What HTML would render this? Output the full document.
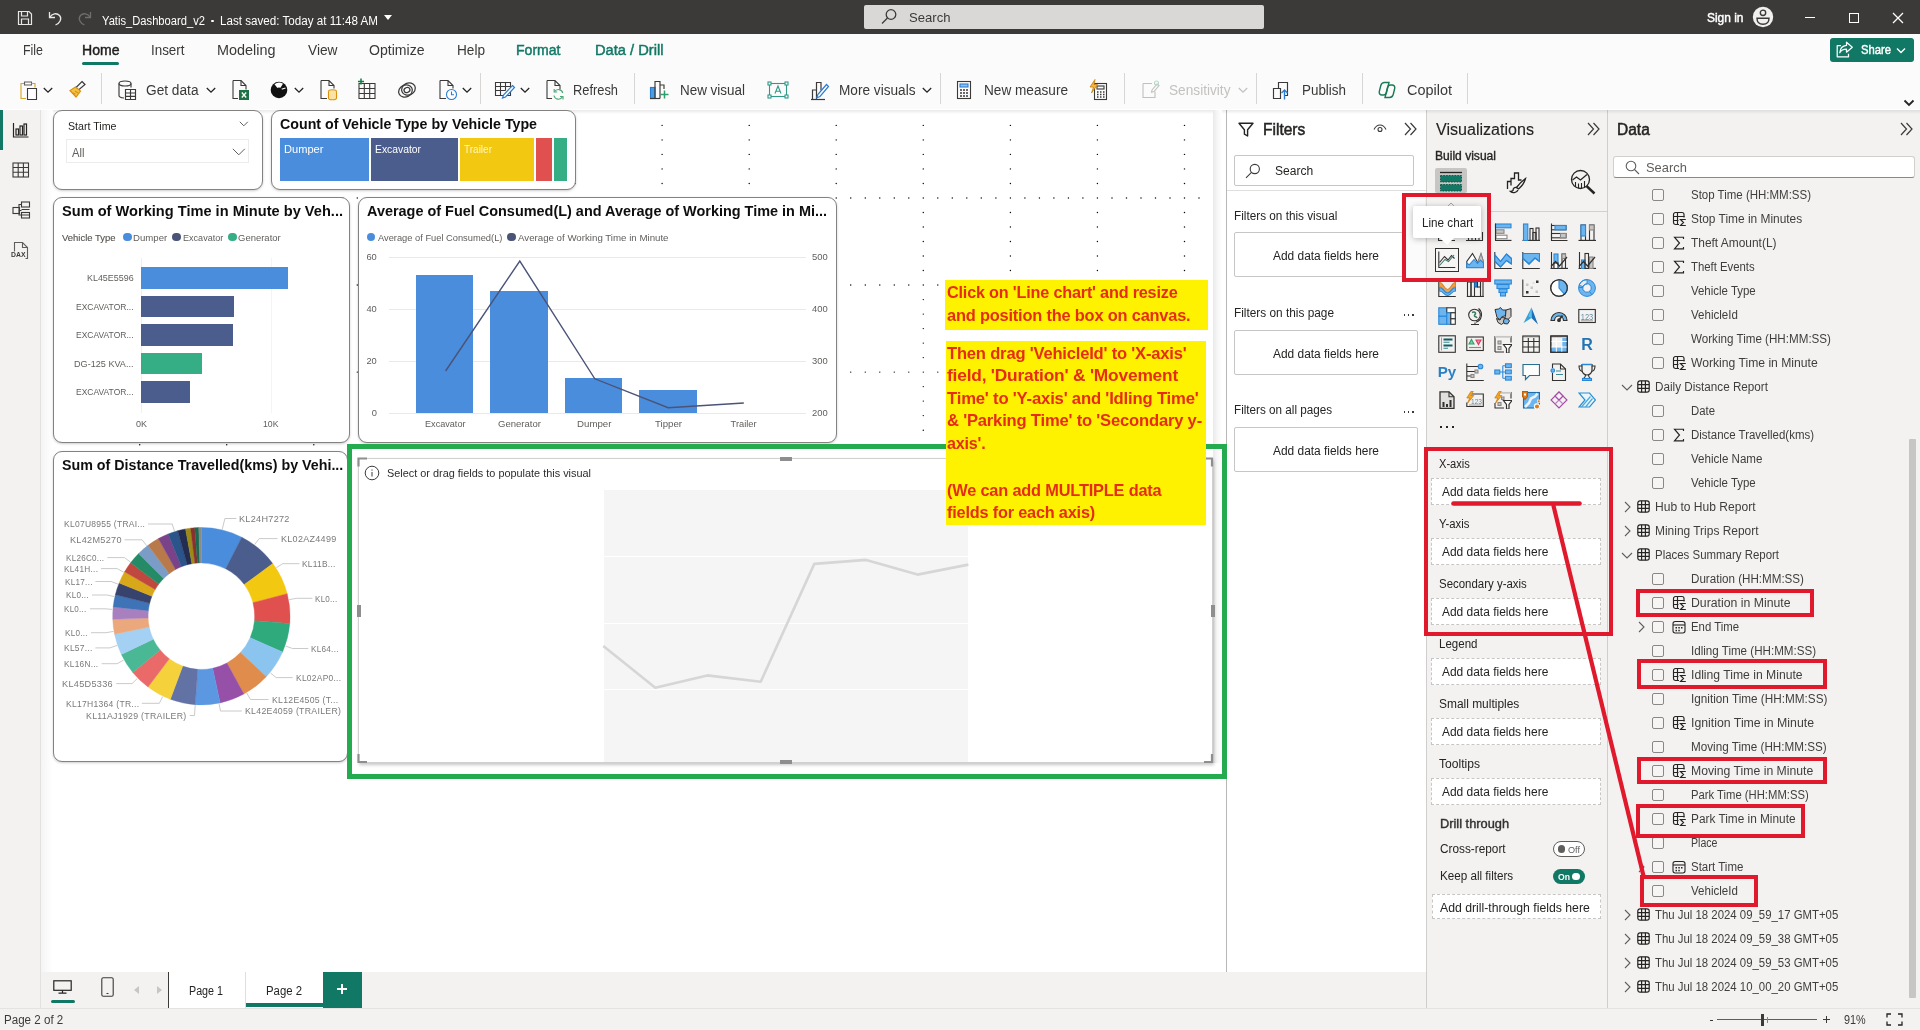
<!DOCTYPE html>
<html><head><meta charset="utf-8">
<style>
*{box-sizing:border-box;margin:0;padding:0}
html,body{width:1920px;height:1030px;overflow:hidden;background:#fff;font-family:"Liberation Sans",sans-serif;color:#252423}
body{will-change:transform}
.a{position:absolute}
.t{position:absolute;white-space:nowrap;line-height:1}
.card{position:absolute;background:#fff;border:1px solid #848280;border-radius:9px;box-shadow:0 1px 2.500px rgba(0,0,0,.2)}
.well{position:absolute;background:#fff;border:1px dashed #c8c6c4}
.fbox{position:absolute;background:#fff;border:1px solid #c8c6c4;border-radius:2px}
.cb{position:absolute;width:12px;height:12px;border:1px solid #8a8886;border-radius:2px;background:#f6f5f4}
.rb{position:absolute;border:4.300px solid #e0192d}
</style></head><body>
<div class="a" style="left:0.00px;top:0.00px;width:1920.00px;height:34.00px;background:#3b3a39;"></div>
<div class="a" style="left:0.00px;top:34.00px;width:1920.00px;height:76.00px;background:#fbfbfb;"></div>
<div class="a" style="left:0.00px;top:109.00px;width:1920.00px;height:1.00px;background:#fff;"></div>
<div class="a" style="left:0.00px;top:110.00px;width:41.00px;height:898.00px;background:#f3f2f1;border-right:1px solid #e3e1df"></div>
<div class="a" style="left:41.00px;top:110.00px;width:1185.00px;height:862.00px;background:#fff;"></div>
<div class="a" style="left:41.00px;top:972.00px;width:1385.00px;height:36.00px;background:#f3f2f1;"></div>
<div class="a" style="left:1226.00px;top:110.00px;width:200.00px;height:862.00px;background:#fff;border-left:1px solid #b9b7b5"></div>
<div class="a" style="left:1425.50px;top:110.00px;width:182.00px;height:898.00px;background:#f3f2f1;border-left:1px solid #d0cecc"></div>
<div class="a" style="left:1607.00px;top:110.00px;width:313.00px;height:898.00px;background:#f3f2f1;border-left:1px solid #d0cecc"></div>
<div class="a" style="left:0.00px;top:1008.00px;width:1920.00px;height:22.00px;background:#f3f2f1;border-top:1px solid #e5e3e1"></div>
<div class="a" style="left:41.00px;top:110.00px;width:1879.00px;height:3.50px;background:linear-gradient(rgba(0,0,0,.085),rgba(0,0,0,0));"></div>
<svg class="a" style="left:16.00px;top:9.00px;" width="18" height="18" viewBox="0 0 18 18"><g fill="none" stroke="#e8e7e6" stroke-width="1.2"><path d="M2.500 2.500h10.500l2.500 2.500v10.500h-13z"></path><path d="M5.500 2.500v4.500h6v-4.500M5.500 15.500v-5.500h7v5.500"></path></g></svg>
<svg class="a" style="left:46.00px;top:9.00px;" width="18" height="18" viewBox="0 0 18 18"><g fill="none" stroke="#e8e7e6" stroke-width="1.3"><path d="M3.500 3v5.500h5.500"></path><path d="M3.800 8.300c2.200-3.800 7-4.800 9.700-1.800 2.800 3.200 0.500 7.500-4 9.500"></path></g></svg>
<svg class="a" style="left:76.00px;top:9.00px;" width="18" height="18" viewBox="0 0 18 18"><g fill="none" stroke="#6e6d6c" stroke-width="1.3"><path d="M14.500 3v5.500h-5.500"></path><path d="M14.200 8.300c-2.200-3.800-7-4.800-9.700-1.800-2.800 3.200-0.500 7.500 4 9.500"></path></g></svg>
<div class="t" style="left: 102px; top: 14.95px; font-size: 12.5px; color: rgb(255, 255, 255); transform: scaleX(0.8947); transform-origin: 0px 0px;">Yatis_Dashboard_v2</div>
<div class="a" style="left:211.30px;top:19.80px;width:2.60px;height:2.60px;background:#fff;border-radius:50%"></div>
<div class="t" style="left: 219.6px; top: 14.95px; font-size: 12.5px; color: rgb(255, 255, 255); transform: scaleX(0.9305); transform-origin: 0px 0px;">Last saved: Today at 11:48 AM</div>
<div class="a" style="left:384px;top:15px;width:0;height:0;border-left:4.500px solid transparent;border-right:4.500px solid transparent;border-top:5px solid #fff"></div>
<div class="a" style="left:864.00px;top:5.00px;width:400.00px;height:24.00px;background:#d9d8d7;border-radius:2px"></div>
<svg class="a" style="left:880.00px;top:8.00px;" width="18" height="18" viewBox="0 0 18 18"><g fill="none" stroke="#3b3a39" stroke-width="1.3"><circle cx="11" cy="6.500" r="4.800"></circle><path d="M7.500 10L2 15.500"></path></g></svg>
<div class="t" style="left: 909px; top: 10.75px; font-size: 13.5px; color: rgb(59, 58, 57); transform: scaleX(0.9701); transform-origin: 0px 0px;">Search</div>
<div class="t" style="left: 1706.8px; top: 11.7px; font-size: 12.6px; color: rgb(255, 255, 255); -webkit-text-stroke: 0.45px rgb(255, 255, 255); transform: scaleX(0.9477); transform-origin: 0px 0px;">Sign in</div>
<svg class="a" style="left:1752.00px;top:5.80px;" width="22" height="22" viewBox="0 0 22 22"><circle cx="11" cy="11" r="10.200" fill="#f1f0ef"></circle><g fill="#f1f0ef" stroke="#3b3a39" stroke-width="1.400"><circle cx="11" cy="6.800" r="2.700"></circle><path d="M5 12.200h12c0 4.300-2.700 6-6 6s-6-1.700-6-6z"></path></g></svg>
<div class="a" style="left:1805.00px;top:17.00px;width:10.00px;height:1.30px;background:#fff;"></div>
<div class="a" style="left:1849px;top:13px;width:10px;height:10px;border:1.300px solid #fff"></div>
<svg class="a" style="left:1892.00px;top:12.00px;" width="12" height="12" viewBox="0 0 12 12"><path d="M1 1l10 10M11 1L1 11" stroke="#fff" stroke-width="1.300"></path></svg>
<div class="t" style="left: 23px; top: 43px; font-size: 14px; color: rgb(58, 57, 56); transform: scaleX(0.8864); transform-origin: 0px 0px;">File</div>
<div class="t" style="left: 81.5px; top: 43px; font-size: 14px; color: rgb(32, 31, 30); -webkit-text-stroke: 0.45px rgb(32, 31, 30); transform: scaleX(1.0038); transform-origin: 0px 0px;">Home</div>
<div class="a" style="left:81.50px;top:62.00px;width:37.50px;height:2.60px;background:#117865;border-radius:1.500px"></div>
<div class="t" style="left: 151px; top: 43px; font-size: 14px; color: rgb(58, 57, 56); transform: scaleX(0.9567); transform-origin: 0px 0px;">Insert</div>
<div class="t" style="left: 217px; top: 43px; font-size: 14px; color: rgb(58, 57, 56); transform: scaleX(1.0294); transform-origin: 0px 0px;">Modeling</div>
<div class="t" style="left: 307.5px; top: 43px; font-size: 14px; color: rgb(58, 57, 56); transform: scaleX(0.9803); transform-origin: 0px 0px;">View</div>
<div class="t" style="left: 368.5px; top: 43px; font-size: 14px; color: rgb(58, 57, 56); transform: scaleX(1.0048); transform-origin: 0px 0px;">Optimize</div>
<div class="t" style="left: 456.5px; top: 43px; font-size: 14px; color: rgb(58, 57, 56); transform: scaleX(0.9723); transform-origin: 0px 0px;">Help</div>
<div class="t" style="left: 515.5px; top: 43px; font-size: 14px; color: rgb(17, 120, 101); -webkit-text-stroke: 0.45px rgb(17, 120, 101); transform: scaleX(1.0035); transform-origin: 0px 0px;">Format</div>
<div class="t" style="left: 595px; top: 43px; font-size: 14px; color: rgb(17, 120, 101); -webkit-text-stroke: 0.45px rgb(17, 120, 101); transform: scaleX(1.0481); transform-origin: 0px 0px;">Data / Drill</div>
<div class="a" style="left:1830.00px;top:38.00px;width:83.50px;height:24.00px;background:#117865;border-radius:3px"></div>
<svg class="a" style="left:1836.00px;top:40.90px;" width="18" height="17" viewBox="0 0 18 17"><g fill="none" stroke="#fff" stroke-width="1.250" stroke-linejoin="round"><path d="M5 4.500H1.200v11.300h11.300v-3"></path><path d="M10.500 1.200l5.800 5-5.800 5v-3c-3.500 0-5.500 1.200-6.700 3.600.3-4.500 2.700-7 6.700-7.400z"></path></g></svg>
<div class="t" style="left: 1861.3px; top: 44.2px; font-size: 12.8px; color: rgb(255, 255, 255); -webkit-text-stroke: 0.45px rgb(255, 255, 255); transform: scaleX(0.8783); transform-origin: 0px 0px;">Share</div>
<svg class="a" style="left:1895.50px;top:46.50px;" width="10" height="8" viewBox="0 0 10 8"><path d="M1 1.500l4 4 4-4" fill="none" stroke="#fff" stroke-width="1.400"></path></svg>
<svg class="a" style="left:19.00px;top:79.00px;" width="20" height="22" viewBox="0 0 20 22"><g fill="none" stroke-width="1.100"><path d="M5.500 4.500h-3.500v15h5" stroke="#d9a520"></path><path d="M5.500 3h7v3h-7z" stroke="#605e5c"></path><path d="M12.500 4.500h3.500v4" stroke="#d9a520"></path><path d="M8.500 9.500h9v11h-9z" stroke="#3b3a39" fill="#fff"></path></g></svg>
<svg class="a" style="left:43.00px;top:87.00px;" width="10" height="7" viewBox="0 0 10 7"><path d="M0.800 1l4.200 4.200L9.200 1" fill="none" stroke="#252423" stroke-width="1.300"></path></svg>
<svg class="a" style="left:68.00px;top:80.00px;" width="19" height="19" viewBox="0 0 19 19"><g fill="none" stroke-width="1.200"><path d="M14 1.500l3 3-6.500 5.500-2.500-2.500z" stroke="#3b3a39"></path><path d="M7.500 7L2 10.500l6 6.500 4.500-6z" stroke="#d9920a" fill="#f5c14a"></path><path d="M5 13l2.500 1M7 11l3 2" stroke="#d9920a"></path></g></svg>
<div class="a" style="left:101.00px;top:73.00px;width:1.00px;height:31.00px;background:#d8d6d4;"></div>
<svg class="a" style="left:117.00px;top:79.00px;" width="20" height="22" viewBox="0 0 20 22"><g fill="none" stroke="#3b3a39" stroke-width="1.150"><ellipse cx="8" cy="4.500" rx="6" ry="2.500"></ellipse><path d="M2 4.500v12c0 1.200 2 2.300 5 2.500M14 4.500v4"></path><path d="M8.500 10.500h10v10h-10zM8.500 14h10M8.500 17.300h10M13.500 10.500v10" fill="#fff"></path></g></svg>
<div class="t" style="left: 146px; top: 82.7px; font-size: 14px; color: rgb(58, 57, 56); transform: scaleX(0.9776); transform-origin: 0px 0px;">Get data</div>
<svg class="a" style="left:206.00px;top:87.00px;" width="10" height="7" viewBox="0 0 10 7"><path d="M0.800 1l4.200 4.200L9.200 1" fill="none" stroke="#252423" stroke-width="1.300"></path></svg>
<svg class="a" style="left:231.00px;top:79.00px;" width="19" height="22" viewBox="0 0 19 22"><g fill="none" stroke-width="1.100"><path d="M2 1.500h8l5 5v4M2 1.500v18h5" stroke="#3b3a39"></path><path d="M10 1.500v5h5" stroke="#3b3a39"></path><rect x="8" y="11" width="10" height="10" fill="#1e7145" stroke="none"></rect><path d="M10.800 13.500l4.400 5M15.200 13.500l-4.400 5" stroke="#fff" stroke-width="1.300"></path></g></svg>
<svg class="a" style="left:270.00px;top:81.00px;" width="18" height="18" viewBox="0 0 18 18"><circle cx="9" cy="9" r="8.300" fill="#111"></circle><path d="M9 9L4.500 3.200A7.200 7.200 0 0 1 13 2.800z" fill="#fff"></path><path d="M9 9l6.500-2" stroke="#fff" stroke-width="1.200"></path><circle cx="9" cy="9.500" r="3" fill="#111"></circle></svg>
<svg class="a" style="left:294.00px;top:87.00px;" width="10" height="7" viewBox="0 0 10 7"><path d="M0.800 1l4.200 4.200L9.200 1" fill="none" stroke="#252423" stroke-width="1.300"></path></svg>
<svg class="a" style="left:319.00px;top:79.00px;" width="19" height="22" viewBox="0 0 19 22"><g fill="none" stroke-width="1.100"><path d="M2 1.500h8l5 5v3M2 1.500v18h6M10 1.500v5h5" stroke="#3b3a39"></path><ellipse cx="13.500" cy="12.500" rx="4" ry="1.800" stroke="#d9920a" fill="#fbe3a6"></ellipse><path d="M9.500 12.500v6.500c0 1 1.800 1.800 4 1.800s4-.8 4-1.800v-6.500" stroke="#d9920a" fill="#fbe3a6"></path></g></svg>
<svg class="a" style="left:356.00px;top:78.00px;" width="21" height="22" viewBox="0 0 21 22"><g fill="none" stroke-width="1.100"><path d="M3 5.500h16v15h-16zM3 10.500h16M3 15.500h16M8.300 5.500v15M13.700 5.500v15" stroke="#3b3a39"></path><path d="M5 0.500v6M2 3.500h6" stroke="#107c41" stroke-width="1.500"></path></g></svg>
<svg class="a" style="left:397.00px;top:81.00px;" width="20" height="18" viewBox="0 0 20 18"><g fill="none" stroke="#3b3a39" stroke-width="1.250"><ellipse cx="8.500" cy="10" rx="7" ry="6" transform="rotate(-25 8.500 10)"></ellipse><ellipse cx="11.500" cy="8" rx="7" ry="6" transform="rotate(-25 11.500 8)"></ellipse><ellipse cx="10" cy="9" rx="3" ry="2.500" transform="rotate(-25 10 9)"></ellipse></g></svg>
<svg class="a" style="left:438.00px;top:79.00px;" width="20" height="22" viewBox="0 0 20 22"><g fill="none" stroke-width="1.100"><path d="M2 1.500h8l5 5v3M2 1.500v18h6M10 1.500v5h5" stroke="#3b3a39"></path><circle cx="13.500" cy="15.500" r="5" stroke="#2b7cd3" fill="#fff"></circle><path d="M13.500 12.500v3.200h2.500" stroke="#2b7cd3"></path></g></svg>
<svg class="a" style="left:462.00px;top:87.00px;" width="10" height="7" viewBox="0 0 10 7"><path d="M0.800 1l4.200 4.200L9.200 1" fill="none" stroke="#252423" stroke-width="1.300"></path></svg>
<div class="a" style="left:480.00px;top:73.00px;width:1.00px;height:31.00px;background:#d8d6d4;"></div>
<svg class="a" style="left:494.00px;top:79.00px;" width="22" height="22" viewBox="0 0 22 22"><g fill="none" stroke-width="1.100"><path d="M1.500 3.500h15v13h-15zM1.500 7.500h15M1.500 11.500h10M6.500 3.500v13M11.500 3.500v8" stroke="#3b3a39"></path><path d="M18.500 6.500l2 2-9 9.500-3 1 1-3z" stroke="#2b7cd3" fill="#fff" stroke-width="1.200"></path></g></svg>
<svg class="a" style="left:520.00px;top:87.00px;" width="10" height="7" viewBox="0 0 10 7"><path d="M0.800 1l4.200 4.200L9.200 1" fill="none" stroke="#252423" stroke-width="1.300"></path></svg>
<svg class="a" style="left:545.00px;top:79.00px;" width="20" height="22" viewBox="0 0 20 22"><g fill="none" stroke-width="1.100"><path d="M2 1.500h8l5 5v4M2 1.500v18h5M10 1.500v5h5" stroke="#3b3a39"></path><path d="M17.800 14a4.500 4.500 0 0 0-8.300-1.200M9 16.500a4.500 4.500 0 0 0 8.400 1.300" stroke="#4fa97a" stroke-width="1.150"></path><path d="M9.200 10v3h3M18 20.500v-3h-3" stroke="#4fa97a" stroke-width="1.150"></path></g></svg>
<div class="t" style="left: 573px; top: 82.7px; font-size: 14px; color: rgb(58, 57, 56); transform: scaleX(0.9178); transform-origin: 0px 0px;">Refresh</div>
<div class="a" style="left:634.00px;top:73.00px;width:1.00px;height:31.00px;background:#d8d6d4;"></div>
<svg class="a" style="left:649.00px;top:79.00px;" width="21" height="22" viewBox="0 0 21 22"><g fill="none" stroke-width="1.150"><rect x="1.500" y="8.500" width="4.500" height="11" fill="#4a9fe0" stroke="#2b7cd3"></rect><path d="M6 19.500V2.500h5v17M11 13v-7h4v4" stroke="#3b3a39"></path><path d="M1 19.500h10" stroke="#3b3a39"></path><path d="M15.500 11.500v8M11.500 15.500h8" stroke="#2e9e6a" stroke-width="1.500"></path></g></svg>
<div class="t" style="left: 680px; top: 82.7px; font-size: 14px; color: rgb(58, 57, 56); transform: scaleX(0.9601); transform-origin: 0px 0px;">New visual</div>
<svg class="a" style="left:767.00px;top:81.00px;" width="22" height="18" viewBox="0 0 22 18"><g fill="none" stroke-width="1.100"><rect x="2.500" y="2.500" width="17" height="13" stroke="#2f9a88"></rect><g fill="#fff" stroke="#2f9a88"><rect x="1" y="1" width="3" height="3"></rect><rect x="18" y="1" width="3" height="3"></rect><rect x="1" y="14" width="3" height="3"></rect><rect x="18" y="14" width="3" height="3"></rect></g><path d="M8 12.500l3-7.500 3 7.500M9 10.300h4" stroke="#2f9a88"></path></g></svg>
<svg class="a" style="left:809.00px;top:79.00px;" width="21" height="22" viewBox="0 0 21 22"><g fill="none" stroke-width="1.200"><path d="M2 20.500h14" stroke="#3b3a39"></path><path d="M3.500 20v-9h4v9M7.500 20V3.500h4.500v8" stroke="#3b3a39"></path><path d="M17.500 5.500l2 2-8.500 10-3.200 1.200 1-3.200z" stroke="#2b7cd3" fill="#fff"></path></g></svg>
<div class="t" style="left: 838.5px; top: 82.7px; font-size: 14px; color: rgb(58, 57, 56); transform: scaleX(0.9734); transform-origin: 0px 0px;">More visuals</div>
<svg class="a" style="left:921.50px;top:87.00px;" width="10" height="7" viewBox="0 0 10 7"><path d="M0.800 1l4.200 4.200L9.200 1" fill="none" stroke="#252423" stroke-width="1.300"></path></svg>
<div class="a" style="left:940.00px;top:73.00px;width:1.00px;height:31.00px;background:#d8d6d4;"></div>
<svg class="a" style="left:956.00px;top:80.00px;" width="16" height="20" viewBox="0 0 16 20"><g fill="none" stroke="#3b3a39" stroke-width="1.100"><rect x="1.500" y="1.500" width="13" height="17"></rect><rect x="4" y="4" width="8" height="3" fill="#8cc4f0" stroke="#2b7cd3"></rect><path d="M4 10h2M7 10h2M10 10h2M4 13h2M7 13h2M10 13h2M4 16h2M7 16h2M10 16h2" stroke-width="1.600"></path></g></svg>
<div class="t" style="left: 984px; top: 82.7px; font-size: 14px; color: rgb(58, 57, 56); transform: scaleX(0.9725); transform-origin: 0px 0px;">New measure</div>
<svg class="a" style="left:1088.00px;top:79.00px;" width="21" height="22" viewBox="0 0 21 22"><g fill="none" stroke-width="1.100"><rect x="6.500" y="4.500" width="12" height="16" stroke="#3b3a39"></rect><rect x="9" y="7" width="7" height="3" stroke="#3b3a39"></rect><path d="M9 13h1.500M12 13h1.500M15 13h1.500M9 15.500h1.500M12 15.500h1.500M15 15.500h1.500M9 18h1.500M12 18h1.500M15 18h1.500" stroke="#3b3a39" stroke-width="1.500"></path><path d="M7 0.500L2 8h3.500l-2 6 6-8.500H6z" fill="#f5b83d" stroke="#c47d0e" stroke-width=".8"></path></g></svg>
<div class="a" style="left:1124.00px;top:73.00px;width:1.00px;height:31.00px;background:#d8d6d4;"></div>
<svg class="a" style="left:1141.00px;top:80.00px;" width="19" height="20" viewBox="0 0 19 20"><g fill="none" stroke="#c2c0be" stroke-width="1.100"><path d="M2 3.500h9M2 3.500v14h12v-6"></path><path d="M11 10l5-6 2 1.500-5 6-2.500.8z"></path><circle cx="15.500" cy="3" r="2" stroke="#b8d8c8"></circle></g></svg>
<div class="t" style="left: 1169px; top: 82.7px; font-size: 14px; color: rgb(196, 194, 192); transform: scaleX(0.9757); transform-origin: 0px 0px;">Sensitivity</div>
<svg class="a" style="left:1238.00px;top:87.00px;" width="10" height="7" viewBox="0 0 10 7"><path d="M0.800 1l4.200 4.200L9.200 1" fill="none" stroke="#c4c2c0" stroke-width="1.300"></path></svg>
<div class="a" style="left:1256.00px;top:73.00px;width:1.00px;height:31.00px;background:#d8d6d4;"></div>
<svg class="a" style="left:1272.00px;top:79.00px;" width="20" height="22" viewBox="0 0 20 22"><g fill="none" stroke-width="1.150"><path d="M1.500 9.500h7v10h-7z" stroke="#3b3a39"></path><path d="M6.500 9V3.500h9v13h-3" stroke="#3b3a39"></path><path d="M12.500 20.500v-9M9.500 14l3-3 3 3" stroke="#2b7cd3" stroke-width="1.400"></path></g></svg>
<div class="t" style="left: 1301.5px; top: 82.7px; font-size: 14px; color: rgb(58, 57, 56); transform: scaleX(0.9581); transform-origin: 0px 0px;">Publish</div>
<div class="a" style="left:1362.00px;top:73.00px;width:1.00px;height:31.00px;background:#d8d6d4;"></div>
<svg class="a" style="left:1377.00px;top:80.00px;" width="20" height="20" viewBox="0 0 20 20"><g fill="none" stroke="#1b7a55" stroke-width="1.400"><path d="M7.500 2.500h4.500l-2.500 10c-.4 1.600-1.500 2.500-3 2.500h-1.500c-2 0-3.200-1.600-2.700-3.500l1.500-6c.5-1.800 1.800-3 3.700-3z"></path><path d="M12.500 17.500h-4.500l2.500-10c.4-1.600 1.500-2.500 3-2.500h1.500c2 0 3.200 1.600 2.700 3.500l-1.500 6c-.5 1.800-1.800 3-3.700 3z"></path></g></svg>
<div class="t" style="left: 1406.5px; top: 82.7px; font-size: 14px; color: rgb(58, 57, 56); transform: scaleX(1.0323); transform-origin: 0px 0px;">Copilot</div>
<div class="a" style="left:1467.00px;top:73.00px;width:1.00px;height:31.00px;background:#d8d6d4;"></div>
<svg class="a" style="left:1903.00px;top:99.00px;" width="12" height="8" viewBox="0 0 12 8"><path d="M1.500 1.500l4.500 4.500 4.500-4.500" fill="none" stroke="#252423" stroke-width="1.800"></path></svg>
<svg class="a" style="left:0;top:0" width="1230" height="780" viewBox="0 0 1230 780"><g fill="#0a0a0a"><circle cx="139.7" cy="125.4" r=".72"></circle><circle cx="139.7" cy="139.9" r=".72"></circle><circle cx="139.7" cy="154.4" r=".72"></circle><circle cx="139.7" cy="168.9" r=".72"></circle><circle cx="139.7" cy="183.5" r=".72"></circle><circle cx="139.7" cy="198.0" r=".72"></circle><circle cx="139.7" cy="212.5" r=".72"></circle><circle cx="139.7" cy="227.0" r=".72"></circle><circle cx="139.7" cy="241.5" r=".72"></circle><circle cx="139.7" cy="256.0" r=".72"></circle><circle cx="139.7" cy="270.5" r=".72"></circle><circle cx="139.7" cy="285.0" r=".72"></circle><circle cx="139.7" cy="299.6" r=".72"></circle><circle cx="139.7" cy="314.1" r=".72"></circle><circle cx="139.7" cy="328.6" r=".72"></circle><circle cx="139.7" cy="343.1" r=".72"></circle><circle cx="139.7" cy="357.6" r=".72"></circle><circle cx="139.7" cy="372.1" r=".72"></circle><circle cx="139.7" cy="386.6" r=".72"></circle><circle cx="139.7" cy="401.1" r=".72"></circle><circle cx="139.7" cy="415.6" r=".72"></circle><circle cx="139.7" cy="430.2" r=".72"></circle><circle cx="139.7" cy="444.7" r=".72"></circle><circle cx="139.7" cy="459.2" r=".72"></circle><circle cx="139.7" cy="473.7" r=".72"></circle><circle cx="139.7" cy="488.2" r=".72"></circle><circle cx="139.7" cy="502.7" r=".72"></circle><circle cx="139.7" cy="517.2" r=".72"></circle><circle cx="139.7" cy="531.7" r=".72"></circle><circle cx="139.7" cy="546.2" r=".72"></circle><circle cx="139.7" cy="560.8" r=".72"></circle><circle cx="139.7" cy="575.3" r=".72"></circle><circle cx="139.7" cy="589.8" r=".72"></circle><circle cx="139.7" cy="604.3" r=".72"></circle><circle cx="139.7" cy="618.8" r=".72"></circle><circle cx="139.7" cy="633.3" r=".72"></circle><circle cx="139.7" cy="647.8" r=".72"></circle><circle cx="139.7" cy="662.3" r=".72"></circle><circle cx="139.7" cy="676.9" r=".72"></circle><circle cx="139.7" cy="691.4" r=".72"></circle><circle cx="139.7" cy="705.9" r=".72"></circle><circle cx="139.7" cy="720.4" r=".72"></circle><circle cx="139.7" cy="734.9" r=".72"></circle><circle cx="139.7" cy="749.4" r=".72"></circle><circle cx="226.7" cy="125.4" r=".72"></circle><circle cx="226.7" cy="139.9" r=".72"></circle><circle cx="226.7" cy="154.4" r=".72"></circle><circle cx="226.7" cy="168.9" r=".72"></circle><circle cx="226.7" cy="183.5" r=".72"></circle><circle cx="226.7" cy="198.0" r=".72"></circle><circle cx="226.7" cy="212.5" r=".72"></circle><circle cx="226.7" cy="227.0" r=".72"></circle><circle cx="226.7" cy="241.5" r=".72"></circle><circle cx="226.7" cy="256.0" r=".72"></circle><circle cx="226.7" cy="270.5" r=".72"></circle><circle cx="226.7" cy="285.0" r=".72"></circle><circle cx="226.7" cy="299.6" r=".72"></circle><circle cx="226.7" cy="314.1" r=".72"></circle><circle cx="226.7" cy="328.6" r=".72"></circle><circle cx="226.7" cy="343.1" r=".72"></circle><circle cx="226.7" cy="357.6" r=".72"></circle><circle cx="226.7" cy="372.1" r=".72"></circle><circle cx="226.7" cy="386.6" r=".72"></circle><circle cx="226.7" cy="401.1" r=".72"></circle><circle cx="226.7" cy="415.6" r=".72"></circle><circle cx="226.7" cy="430.2" r=".72"></circle><circle cx="226.7" cy="444.7" r=".72"></circle><circle cx="226.7" cy="459.2" r=".72"></circle><circle cx="226.7" cy="473.7" r=".72"></circle><circle cx="226.7" cy="488.2" r=".72"></circle><circle cx="226.7" cy="502.7" r=".72"></circle><circle cx="226.7" cy="517.2" r=".72"></circle><circle cx="226.7" cy="531.7" r=".72"></circle><circle cx="226.7" cy="546.2" r=".72"></circle><circle cx="226.7" cy="560.8" r=".72"></circle><circle cx="226.7" cy="575.3" r=".72"></circle><circle cx="226.7" cy="589.8" r=".72"></circle><circle cx="226.7" cy="604.3" r=".72"></circle><circle cx="226.7" cy="618.8" r=".72"></circle><circle cx="226.7" cy="633.3" r=".72"></circle><circle cx="226.7" cy="647.8" r=".72"></circle><circle cx="226.7" cy="662.3" r=".72"></circle><circle cx="226.7" cy="676.9" r=".72"></circle><circle cx="226.7" cy="691.4" r=".72"></circle><circle cx="226.7" cy="705.9" r=".72"></circle><circle cx="226.7" cy="720.4" r=".72"></circle><circle cx="226.7" cy="734.9" r=".72"></circle><circle cx="226.7" cy="749.4" r=".72"></circle><circle cx="313.8" cy="125.4" r=".72"></circle><circle cx="313.8" cy="139.9" r=".72"></circle><circle cx="313.8" cy="154.4" r=".72"></circle><circle cx="313.8" cy="168.9" r=".72"></circle><circle cx="313.8" cy="183.5" r=".72"></circle><circle cx="313.8" cy="198.0" r=".72"></circle><circle cx="313.8" cy="212.5" r=".72"></circle><circle cx="313.8" cy="227.0" r=".72"></circle><circle cx="313.8" cy="241.5" r=".72"></circle><circle cx="313.8" cy="256.0" r=".72"></circle><circle cx="313.8" cy="270.5" r=".72"></circle><circle cx="313.8" cy="285.0" r=".72"></circle><circle cx="313.8" cy="299.6" r=".72"></circle><circle cx="313.8" cy="314.1" r=".72"></circle><circle cx="313.8" cy="328.6" r=".72"></circle><circle cx="313.8" cy="343.1" r=".72"></circle><circle cx="313.8" cy="357.6" r=".72"></circle><circle cx="313.8" cy="372.1" r=".72"></circle><circle cx="313.8" cy="386.6" r=".72"></circle><circle cx="313.8" cy="401.1" r=".72"></circle><circle cx="313.8" cy="415.6" r=".72"></circle><circle cx="313.8" cy="430.2" r=".72"></circle><circle cx="313.8" cy="444.7" r=".72"></circle><circle cx="313.8" cy="459.2" r=".72"></circle><circle cx="313.8" cy="473.7" r=".72"></circle><circle cx="313.8" cy="488.2" r=".72"></circle><circle cx="313.8" cy="502.7" r=".72"></circle><circle cx="313.8" cy="517.2" r=".72"></circle><circle cx="313.8" cy="531.7" r=".72"></circle><circle cx="313.8" cy="546.2" r=".72"></circle><circle cx="313.8" cy="560.8" r=".72"></circle><circle cx="313.8" cy="575.3" r=".72"></circle><circle cx="313.8" cy="589.8" r=".72"></circle><circle cx="313.8" cy="604.3" r=".72"></circle><circle cx="313.8" cy="618.8" r=".72"></circle><circle cx="313.8" cy="633.3" r=".72"></circle><circle cx="313.8" cy="647.8" r=".72"></circle><circle cx="313.8" cy="662.3" r=".72"></circle><circle cx="313.8" cy="676.9" r=".72"></circle><circle cx="313.8" cy="691.4" r=".72"></circle><circle cx="313.8" cy="705.9" r=".72"></circle><circle cx="313.8" cy="720.4" r=".72"></circle><circle cx="313.8" cy="734.9" r=".72"></circle><circle cx="313.8" cy="749.4" r=".72"></circle><circle cx="400.9" cy="125.4" r=".72"></circle><circle cx="400.9" cy="139.9" r=".72"></circle><circle cx="400.9" cy="154.4" r=".72"></circle><circle cx="400.9" cy="168.9" r=".72"></circle><circle cx="400.9" cy="183.5" r=".72"></circle><circle cx="400.9" cy="198.0" r=".72"></circle><circle cx="400.9" cy="212.5" r=".72"></circle><circle cx="400.9" cy="227.0" r=".72"></circle><circle cx="400.9" cy="241.5" r=".72"></circle><circle cx="400.9" cy="256.0" r=".72"></circle><circle cx="400.9" cy="270.5" r=".72"></circle><circle cx="400.9" cy="285.0" r=".72"></circle><circle cx="400.9" cy="299.6" r=".72"></circle><circle cx="400.9" cy="314.1" r=".72"></circle><circle cx="400.9" cy="328.6" r=".72"></circle><circle cx="400.9" cy="343.1" r=".72"></circle><circle cx="400.9" cy="357.6" r=".72"></circle><circle cx="400.9" cy="372.1" r=".72"></circle><circle cx="400.9" cy="386.6" r=".72"></circle><circle cx="400.9" cy="401.1" r=".72"></circle><circle cx="400.9" cy="415.6" r=".72"></circle><circle cx="400.9" cy="430.2" r=".72"></circle><circle cx="400.9" cy="444.7" r=".72"></circle><circle cx="400.9" cy="459.2" r=".72"></circle><circle cx="400.9" cy="473.7" r=".72"></circle><circle cx="400.9" cy="488.2" r=".72"></circle><circle cx="400.9" cy="502.7" r=".72"></circle><circle cx="400.9" cy="517.2" r=".72"></circle><circle cx="400.9" cy="531.7" r=".72"></circle><circle cx="400.9" cy="546.2" r=".72"></circle><circle cx="400.9" cy="560.8" r=".72"></circle><circle cx="400.9" cy="575.3" r=".72"></circle><circle cx="400.9" cy="589.8" r=".72"></circle><circle cx="400.9" cy="604.3" r=".72"></circle><circle cx="400.9" cy="618.8" r=".72"></circle><circle cx="400.9" cy="633.3" r=".72"></circle><circle cx="400.9" cy="647.8" r=".72"></circle><circle cx="400.9" cy="662.3" r=".72"></circle><circle cx="400.9" cy="676.9" r=".72"></circle><circle cx="400.9" cy="691.4" r=".72"></circle><circle cx="400.9" cy="705.9" r=".72"></circle><circle cx="400.9" cy="720.4" r=".72"></circle><circle cx="400.9" cy="734.9" r=".72"></circle><circle cx="400.9" cy="749.4" r=".72"></circle><circle cx="487.9" cy="125.4" r=".72"></circle><circle cx="487.9" cy="139.9" r=".72"></circle><circle cx="487.9" cy="154.4" r=".72"></circle><circle cx="487.9" cy="168.9" r=".72"></circle><circle cx="487.9" cy="183.5" r=".72"></circle><circle cx="487.9" cy="198.0" r=".72"></circle><circle cx="487.9" cy="212.5" r=".72"></circle><circle cx="487.9" cy="227.0" r=".72"></circle><circle cx="487.9" cy="241.5" r=".72"></circle><circle cx="487.9" cy="256.0" r=".72"></circle><circle cx="487.9" cy="270.5" r=".72"></circle><circle cx="487.9" cy="285.0" r=".72"></circle><circle cx="487.9" cy="299.6" r=".72"></circle><circle cx="487.9" cy="314.1" r=".72"></circle><circle cx="487.9" cy="328.6" r=".72"></circle><circle cx="487.9" cy="343.1" r=".72"></circle><circle cx="487.9" cy="357.6" r=".72"></circle><circle cx="487.9" cy="372.1" r=".72"></circle><circle cx="487.9" cy="386.6" r=".72"></circle><circle cx="487.9" cy="401.1" r=".72"></circle><circle cx="487.9" cy="415.6" r=".72"></circle><circle cx="487.9" cy="430.2" r=".72"></circle><circle cx="487.9" cy="444.7" r=".72"></circle><circle cx="487.9" cy="459.2" r=".72"></circle><circle cx="487.9" cy="473.7" r=".72"></circle><circle cx="487.9" cy="488.2" r=".72"></circle><circle cx="487.9" cy="502.7" r=".72"></circle><circle cx="487.9" cy="517.2" r=".72"></circle><circle cx="487.9" cy="531.7" r=".72"></circle><circle cx="487.9" cy="546.2" r=".72"></circle><circle cx="487.9" cy="560.8" r=".72"></circle><circle cx="487.9" cy="575.3" r=".72"></circle><circle cx="487.9" cy="589.8" r=".72"></circle><circle cx="487.9" cy="604.3" r=".72"></circle><circle cx="487.9" cy="618.8" r=".72"></circle><circle cx="487.9" cy="633.3" r=".72"></circle><circle cx="487.9" cy="647.8" r=".72"></circle><circle cx="487.9" cy="662.3" r=".72"></circle><circle cx="487.9" cy="676.9" r=".72"></circle><circle cx="487.9" cy="691.4" r=".72"></circle><circle cx="487.9" cy="705.9" r=".72"></circle><circle cx="487.9" cy="720.4" r=".72"></circle><circle cx="487.9" cy="734.9" r=".72"></circle><circle cx="487.9" cy="749.4" r=".72"></circle><circle cx="575.0" cy="125.4" r=".72"></circle><circle cx="575.0" cy="139.9" r=".72"></circle><circle cx="575.0" cy="154.4" r=".72"></circle><circle cx="575.0" cy="168.9" r=".72"></circle><circle cx="575.0" cy="183.5" r=".72"></circle><circle cx="575.0" cy="198.0" r=".72"></circle><circle cx="575.0" cy="212.5" r=".72"></circle><circle cx="575.0" cy="227.0" r=".72"></circle><circle cx="575.0" cy="241.5" r=".72"></circle><circle cx="575.0" cy="256.0" r=".72"></circle><circle cx="575.0" cy="270.5" r=".72"></circle><circle cx="575.0" cy="285.0" r=".72"></circle><circle cx="575.0" cy="299.6" r=".72"></circle><circle cx="575.0" cy="314.1" r=".72"></circle><circle cx="575.0" cy="328.6" r=".72"></circle><circle cx="575.0" cy="343.1" r=".72"></circle><circle cx="575.0" cy="357.6" r=".72"></circle><circle cx="575.0" cy="372.1" r=".72"></circle><circle cx="575.0" cy="386.6" r=".72"></circle><circle cx="575.0" cy="401.1" r=".72"></circle><circle cx="575.0" cy="415.6" r=".72"></circle><circle cx="575.0" cy="430.2" r=".72"></circle><circle cx="575.0" cy="444.7" r=".72"></circle><circle cx="575.0" cy="459.2" r=".72"></circle><circle cx="575.0" cy="473.7" r=".72"></circle><circle cx="575.0" cy="488.2" r=".72"></circle><circle cx="575.0" cy="502.7" r=".72"></circle><circle cx="575.0" cy="517.2" r=".72"></circle><circle cx="575.0" cy="531.7" r=".72"></circle><circle cx="575.0" cy="546.2" r=".72"></circle><circle cx="575.0" cy="560.8" r=".72"></circle><circle cx="575.0" cy="575.3" r=".72"></circle><circle cx="575.0" cy="589.8" r=".72"></circle><circle cx="575.0" cy="604.3" r=".72"></circle><circle cx="575.0" cy="618.8" r=".72"></circle><circle cx="575.0" cy="633.3" r=".72"></circle><circle cx="575.0" cy="647.8" r=".72"></circle><circle cx="575.0" cy="662.3" r=".72"></circle><circle cx="575.0" cy="676.9" r=".72"></circle><circle cx="575.0" cy="691.4" r=".72"></circle><circle cx="575.0" cy="705.9" r=".72"></circle><circle cx="575.0" cy="720.4" r=".72"></circle><circle cx="575.0" cy="734.9" r=".72"></circle><circle cx="575.0" cy="749.4" r=".72"></circle><circle cx="662.1" cy="125.4" r=".72"></circle><circle cx="662.1" cy="139.9" r=".72"></circle><circle cx="662.1" cy="154.4" r=".72"></circle><circle cx="662.1" cy="168.9" r=".72"></circle><circle cx="662.1" cy="183.5" r=".72"></circle><circle cx="662.1" cy="198.0" r=".72"></circle><circle cx="662.1" cy="212.5" r=".72"></circle><circle cx="662.1" cy="227.0" r=".72"></circle><circle cx="662.1" cy="241.5" r=".72"></circle><circle cx="662.1" cy="256.0" r=".72"></circle><circle cx="662.1" cy="270.5" r=".72"></circle><circle cx="662.1" cy="285.0" r=".72"></circle><circle cx="662.1" cy="299.6" r=".72"></circle><circle cx="662.1" cy="314.1" r=".72"></circle><circle cx="662.1" cy="328.6" r=".72"></circle><circle cx="662.1" cy="343.1" r=".72"></circle><circle cx="662.1" cy="357.6" r=".72"></circle><circle cx="662.1" cy="372.1" r=".72"></circle><circle cx="662.1" cy="386.6" r=".72"></circle><circle cx="662.1" cy="401.1" r=".72"></circle><circle cx="662.1" cy="415.6" r=".72"></circle><circle cx="662.1" cy="430.2" r=".72"></circle><circle cx="662.1" cy="444.7" r=".72"></circle><circle cx="662.1" cy="459.2" r=".72"></circle><circle cx="662.1" cy="473.7" r=".72"></circle><circle cx="662.1" cy="488.2" r=".72"></circle><circle cx="662.1" cy="502.7" r=".72"></circle><circle cx="662.1" cy="517.2" r=".72"></circle><circle cx="662.1" cy="531.7" r=".72"></circle><circle cx="662.1" cy="546.2" r=".72"></circle><circle cx="662.1" cy="560.8" r=".72"></circle><circle cx="662.1" cy="575.3" r=".72"></circle><circle cx="662.1" cy="589.8" r=".72"></circle><circle cx="662.1" cy="604.3" r=".72"></circle><circle cx="662.1" cy="618.8" r=".72"></circle><circle cx="662.1" cy="633.3" r=".72"></circle><circle cx="662.1" cy="647.8" r=".72"></circle><circle cx="662.1" cy="662.3" r=".72"></circle><circle cx="662.1" cy="676.9" r=".72"></circle><circle cx="662.1" cy="691.4" r=".72"></circle><circle cx="662.1" cy="705.9" r=".72"></circle><circle cx="662.1" cy="720.4" r=".72"></circle><circle cx="662.1" cy="734.9" r=".72"></circle><circle cx="662.1" cy="749.4" r=".72"></circle><circle cx="749.2" cy="125.4" r=".72"></circle><circle cx="749.2" cy="139.9" r=".72"></circle><circle cx="749.2" cy="154.4" r=".72"></circle><circle cx="749.2" cy="168.9" r=".72"></circle><circle cx="749.2" cy="183.5" r=".72"></circle><circle cx="749.2" cy="198.0" r=".72"></circle><circle cx="749.2" cy="212.5" r=".72"></circle><circle cx="749.2" cy="227.0" r=".72"></circle><circle cx="749.2" cy="241.5" r=".72"></circle><circle cx="749.2" cy="256.0" r=".72"></circle><circle cx="749.2" cy="270.5" r=".72"></circle><circle cx="749.2" cy="285.0" r=".72"></circle><circle cx="749.2" cy="299.6" r=".72"></circle><circle cx="749.2" cy="314.1" r=".72"></circle><circle cx="749.2" cy="328.6" r=".72"></circle><circle cx="749.2" cy="343.1" r=".72"></circle><circle cx="749.2" cy="357.6" r=".72"></circle><circle cx="749.2" cy="372.1" r=".72"></circle><circle cx="749.2" cy="386.6" r=".72"></circle><circle cx="749.2" cy="401.1" r=".72"></circle><circle cx="749.2" cy="415.6" r=".72"></circle><circle cx="749.2" cy="430.2" r=".72"></circle><circle cx="749.2" cy="444.7" r=".72"></circle><circle cx="749.2" cy="459.2" r=".72"></circle><circle cx="749.2" cy="473.7" r=".72"></circle><circle cx="749.2" cy="488.2" r=".72"></circle><circle cx="749.2" cy="502.7" r=".72"></circle><circle cx="749.2" cy="517.2" r=".72"></circle><circle cx="749.2" cy="531.7" r=".72"></circle><circle cx="749.2" cy="546.2" r=".72"></circle><circle cx="749.2" cy="560.8" r=".72"></circle><circle cx="749.2" cy="575.3" r=".72"></circle><circle cx="749.2" cy="589.8" r=".72"></circle><circle cx="749.2" cy="604.3" r=".72"></circle><circle cx="749.2" cy="618.8" r=".72"></circle><circle cx="749.2" cy="633.3" r=".72"></circle><circle cx="749.2" cy="647.8" r=".72"></circle><circle cx="749.2" cy="662.3" r=".72"></circle><circle cx="749.2" cy="676.9" r=".72"></circle><circle cx="749.2" cy="691.4" r=".72"></circle><circle cx="749.2" cy="705.9" r=".72"></circle><circle cx="749.2" cy="720.4" r=".72"></circle><circle cx="749.2" cy="734.9" r=".72"></circle><circle cx="749.2" cy="749.4" r=".72"></circle><circle cx="836.2" cy="125.4" r=".72"></circle><circle cx="836.2" cy="139.9" r=".72"></circle><circle cx="836.2" cy="154.4" r=".72"></circle><circle cx="836.2" cy="168.9" r=".72"></circle><circle cx="836.2" cy="183.5" r=".72"></circle><circle cx="836.2" cy="198.0" r=".72"></circle><circle cx="836.2" cy="212.5" r=".72"></circle><circle cx="836.2" cy="227.0" r=".72"></circle><circle cx="836.2" cy="241.5" r=".72"></circle><circle cx="836.2" cy="256.0" r=".72"></circle><circle cx="836.2" cy="270.5" r=".72"></circle><circle cx="836.2" cy="285.0" r=".72"></circle><circle cx="836.2" cy="299.6" r=".72"></circle><circle cx="836.2" cy="314.1" r=".72"></circle><circle cx="836.2" cy="328.6" r=".72"></circle><circle cx="836.2" cy="343.1" r=".72"></circle><circle cx="836.2" cy="357.6" r=".72"></circle><circle cx="836.2" cy="372.1" r=".72"></circle><circle cx="836.2" cy="386.6" r=".72"></circle><circle cx="836.2" cy="401.1" r=".72"></circle><circle cx="836.2" cy="415.6" r=".72"></circle><circle cx="836.2" cy="430.2" r=".72"></circle><circle cx="836.2" cy="444.7" r=".72"></circle><circle cx="836.2" cy="459.2" r=".72"></circle><circle cx="836.2" cy="473.7" r=".72"></circle><circle cx="836.2" cy="488.2" r=".72"></circle><circle cx="836.2" cy="502.7" r=".72"></circle><circle cx="836.2" cy="517.2" r=".72"></circle><circle cx="836.2" cy="531.7" r=".72"></circle><circle cx="836.2" cy="546.2" r=".72"></circle><circle cx="836.2" cy="560.8" r=".72"></circle><circle cx="836.2" cy="575.3" r=".72"></circle><circle cx="836.2" cy="589.8" r=".72"></circle><circle cx="836.2" cy="604.3" r=".72"></circle><circle cx="836.2" cy="618.8" r=".72"></circle><circle cx="836.2" cy="633.3" r=".72"></circle><circle cx="836.2" cy="647.8" r=".72"></circle><circle cx="836.2" cy="662.3" r=".72"></circle><circle cx="836.2" cy="676.9" r=".72"></circle><circle cx="836.2" cy="691.4" r=".72"></circle><circle cx="836.2" cy="705.9" r=".72"></circle><circle cx="836.2" cy="720.4" r=".72"></circle><circle cx="836.2" cy="734.9" r=".72"></circle><circle cx="836.2" cy="749.4" r=".72"></circle><circle cx="923.3" cy="125.4" r=".72"></circle><circle cx="923.3" cy="139.9" r=".72"></circle><circle cx="923.3" cy="154.4" r=".72"></circle><circle cx="923.3" cy="168.9" r=".72"></circle><circle cx="923.3" cy="183.5" r=".72"></circle><circle cx="923.3" cy="198.0" r=".72"></circle><circle cx="923.3" cy="212.5" r=".72"></circle><circle cx="923.3" cy="227.0" r=".72"></circle><circle cx="923.3" cy="241.5" r=".72"></circle><circle cx="923.3" cy="256.0" r=".72"></circle><circle cx="923.3" cy="270.5" r=".72"></circle><circle cx="923.3" cy="285.0" r=".72"></circle><circle cx="923.3" cy="299.6" r=".72"></circle><circle cx="923.3" cy="314.1" r=".72"></circle><circle cx="923.3" cy="328.6" r=".72"></circle><circle cx="923.3" cy="343.1" r=".72"></circle><circle cx="923.3" cy="357.6" r=".72"></circle><circle cx="923.3" cy="372.1" r=".72"></circle><circle cx="923.3" cy="386.6" r=".72"></circle><circle cx="923.3" cy="401.1" r=".72"></circle><circle cx="923.3" cy="415.6" r=".72"></circle><circle cx="923.3" cy="430.2" r=".72"></circle><circle cx="923.3" cy="444.7" r=".72"></circle><circle cx="923.3" cy="459.2" r=".72"></circle><circle cx="923.3" cy="473.7" r=".72"></circle><circle cx="923.3" cy="488.2" r=".72"></circle><circle cx="923.3" cy="502.7" r=".72"></circle><circle cx="923.3" cy="517.2" r=".72"></circle><circle cx="923.3" cy="531.7" r=".72"></circle><circle cx="923.3" cy="546.2" r=".72"></circle><circle cx="923.3" cy="560.8" r=".72"></circle><circle cx="923.3" cy="575.3" r=".72"></circle><circle cx="923.3" cy="589.8" r=".72"></circle><circle cx="923.3" cy="604.3" r=".72"></circle><circle cx="923.3" cy="618.8" r=".72"></circle><circle cx="923.3" cy="633.3" r=".72"></circle><circle cx="923.3" cy="647.8" r=".72"></circle><circle cx="923.3" cy="662.3" r=".72"></circle><circle cx="923.3" cy="676.9" r=".72"></circle><circle cx="923.3" cy="691.4" r=".72"></circle><circle cx="923.3" cy="705.9" r=".72"></circle><circle cx="923.3" cy="720.4" r=".72"></circle><circle cx="923.3" cy="734.9" r=".72"></circle><circle cx="923.3" cy="749.4" r=".72"></circle><circle cx="1010.4" cy="125.4" r=".72"></circle><circle cx="1010.4" cy="139.9" r=".72"></circle><circle cx="1010.4" cy="154.4" r=".72"></circle><circle cx="1010.4" cy="168.9" r=".72"></circle><circle cx="1010.4" cy="183.5" r=".72"></circle><circle cx="1010.4" cy="198.0" r=".72"></circle><circle cx="1010.4" cy="212.5" r=".72"></circle><circle cx="1010.4" cy="227.0" r=".72"></circle><circle cx="1010.4" cy="241.5" r=".72"></circle><circle cx="1010.4" cy="256.0" r=".72"></circle><circle cx="1010.4" cy="270.5" r=".72"></circle><circle cx="1010.4" cy="285.0" r=".72"></circle><circle cx="1010.4" cy="299.6" r=".72"></circle><circle cx="1010.4" cy="314.1" r=".72"></circle><circle cx="1010.4" cy="328.6" r=".72"></circle><circle cx="1010.4" cy="343.1" r=".72"></circle><circle cx="1010.4" cy="357.6" r=".72"></circle><circle cx="1010.4" cy="372.1" r=".72"></circle><circle cx="1010.4" cy="386.6" r=".72"></circle><circle cx="1010.4" cy="401.1" r=".72"></circle><circle cx="1010.4" cy="415.6" r=".72"></circle><circle cx="1010.4" cy="430.2" r=".72"></circle><circle cx="1010.4" cy="444.7" r=".72"></circle><circle cx="1010.4" cy="459.2" r=".72"></circle><circle cx="1010.4" cy="473.7" r=".72"></circle><circle cx="1010.4" cy="488.2" r=".72"></circle><circle cx="1010.4" cy="502.7" r=".72"></circle><circle cx="1010.4" cy="517.2" r=".72"></circle><circle cx="1010.4" cy="531.7" r=".72"></circle><circle cx="1010.4" cy="546.2" r=".72"></circle><circle cx="1010.4" cy="560.8" r=".72"></circle><circle cx="1010.4" cy="575.3" r=".72"></circle><circle cx="1010.4" cy="589.8" r=".72"></circle><circle cx="1010.4" cy="604.3" r=".72"></circle><circle cx="1010.4" cy="618.8" r=".72"></circle><circle cx="1010.4" cy="633.3" r=".72"></circle><circle cx="1010.4" cy="647.8" r=".72"></circle><circle cx="1010.4" cy="662.3" r=".72"></circle><circle cx="1010.4" cy="676.9" r=".72"></circle><circle cx="1010.4" cy="691.4" r=".72"></circle><circle cx="1010.4" cy="705.9" r=".72"></circle><circle cx="1010.4" cy="720.4" r=".72"></circle><circle cx="1010.4" cy="734.9" r=".72"></circle><circle cx="1010.4" cy="749.4" r=".72"></circle><circle cx="1097.4" cy="125.4" r=".72"></circle><circle cx="1097.4" cy="139.9" r=".72"></circle><circle cx="1097.4" cy="154.4" r=".72"></circle><circle cx="1097.4" cy="168.9" r=".72"></circle><circle cx="1097.4" cy="183.5" r=".72"></circle><circle cx="1097.4" cy="198.0" r=".72"></circle><circle cx="1097.4" cy="212.5" r=".72"></circle><circle cx="1097.4" cy="227.0" r=".72"></circle><circle cx="1097.4" cy="241.5" r=".72"></circle><circle cx="1097.4" cy="256.0" r=".72"></circle><circle cx="1097.4" cy="270.5" r=".72"></circle><circle cx="1097.4" cy="285.0" r=".72"></circle><circle cx="1097.4" cy="299.6" r=".72"></circle><circle cx="1097.4" cy="314.1" r=".72"></circle><circle cx="1097.4" cy="328.6" r=".72"></circle><circle cx="1097.4" cy="343.1" r=".72"></circle><circle cx="1097.4" cy="357.6" r=".72"></circle><circle cx="1097.4" cy="372.1" r=".72"></circle><circle cx="1097.4" cy="386.6" r=".72"></circle><circle cx="1097.4" cy="401.1" r=".72"></circle><circle cx="1097.4" cy="415.6" r=".72"></circle><circle cx="1097.4" cy="430.2" r=".72"></circle><circle cx="1097.4" cy="444.7" r=".72"></circle><circle cx="1097.4" cy="459.2" r=".72"></circle><circle cx="1097.4" cy="473.7" r=".72"></circle><circle cx="1097.4" cy="488.2" r=".72"></circle><circle cx="1097.4" cy="502.7" r=".72"></circle><circle cx="1097.4" cy="517.2" r=".72"></circle><circle cx="1097.4" cy="531.7" r=".72"></circle><circle cx="1097.4" cy="546.2" r=".72"></circle><circle cx="1097.4" cy="560.8" r=".72"></circle><circle cx="1097.4" cy="575.3" r=".72"></circle><circle cx="1097.4" cy="589.8" r=".72"></circle><circle cx="1097.4" cy="604.3" r=".72"></circle><circle cx="1097.4" cy="618.8" r=".72"></circle><circle cx="1097.4" cy="633.3" r=".72"></circle><circle cx="1097.4" cy="647.8" r=".72"></circle><circle cx="1097.4" cy="662.3" r=".72"></circle><circle cx="1097.4" cy="676.9" r=".72"></circle><circle cx="1097.4" cy="691.4" r=".72"></circle><circle cx="1097.4" cy="705.9" r=".72"></circle><circle cx="1097.4" cy="720.4" r=".72"></circle><circle cx="1097.4" cy="734.9" r=".72"></circle><circle cx="1097.4" cy="749.4" r=".72"></circle><circle cx="1184.5" cy="125.4" r=".72"></circle><circle cx="1184.5" cy="139.9" r=".72"></circle><circle cx="1184.5" cy="154.4" r=".72"></circle><circle cx="1184.5" cy="168.9" r=".72"></circle><circle cx="1184.5" cy="183.5" r=".72"></circle><circle cx="1184.5" cy="198.0" r=".72"></circle><circle cx="1184.5" cy="212.5" r=".72"></circle><circle cx="1184.5" cy="227.0" r=".72"></circle><circle cx="1184.5" cy="241.5" r=".72"></circle><circle cx="1184.5" cy="256.0" r=".72"></circle><circle cx="1184.5" cy="270.5" r=".72"></circle><circle cx="1184.5" cy="285.0" r=".72"></circle><circle cx="1184.5" cy="299.6" r=".72"></circle><circle cx="1184.5" cy="314.1" r=".72"></circle><circle cx="1184.5" cy="328.6" r=".72"></circle><circle cx="1184.5" cy="343.1" r=".72"></circle><circle cx="1184.5" cy="357.6" r=".72"></circle><circle cx="1184.5" cy="372.1" r=".72"></circle><circle cx="1184.5" cy="386.6" r=".72"></circle><circle cx="1184.5" cy="401.1" r=".72"></circle><circle cx="1184.5" cy="415.6" r=".72"></circle><circle cx="1184.5" cy="430.2" r=".72"></circle><circle cx="1184.5" cy="444.7" r=".72"></circle><circle cx="1184.5" cy="459.2" r=".72"></circle><circle cx="1184.5" cy="473.7" r=".72"></circle><circle cx="1184.5" cy="488.2" r=".72"></circle><circle cx="1184.5" cy="502.7" r=".72"></circle><circle cx="1184.5" cy="517.2" r=".72"></circle><circle cx="1184.5" cy="531.7" r=".72"></circle><circle cx="1184.5" cy="546.2" r=".72"></circle><circle cx="1184.5" cy="560.8" r=".72"></circle><circle cx="1184.5" cy="575.3" r=".72"></circle><circle cx="1184.5" cy="589.8" r=".72"></circle><circle cx="1184.5" cy="604.3" r=".72"></circle><circle cx="1184.5" cy="618.8" r=".72"></circle><circle cx="1184.5" cy="633.3" r=".72"></circle><circle cx="1184.5" cy="647.8" r=".72"></circle><circle cx="1184.5" cy="662.3" r=".72"></circle><circle cx="1184.5" cy="676.9" r=".72"></circle><circle cx="1184.5" cy="691.4" r=".72"></circle><circle cx="1184.5" cy="705.9" r=".72"></circle><circle cx="1184.5" cy="720.4" r=".72"></circle><circle cx="1184.5" cy="734.9" r=".72"></circle><circle cx="1184.5" cy="749.4" r=".72"></circle><circle cx="67.1" cy="198.0" r=".72"></circle><circle cx="81.6" cy="198.0" r=".72"></circle><circle cx="96.1" cy="198.0" r=".72"></circle><circle cx="110.6" cy="198.0" r=".72"></circle><circle cx="125.2" cy="198.0" r=".72"></circle><circle cx="154.2" cy="198.0" r=".72"></circle><circle cx="168.7" cy="198.0" r=".72"></circle><circle cx="183.2" cy="198.0" r=".72"></circle><circle cx="197.7" cy="198.0" r=".72"></circle><circle cx="212.2" cy="198.0" r=".72"></circle><circle cx="241.3" cy="198.0" r=".72"></circle><circle cx="255.8" cy="198.0" r=".72"></circle><circle cx="270.3" cy="198.0" r=".72"></circle><circle cx="284.8" cy="198.0" r=".72"></circle><circle cx="299.3" cy="198.0" r=".72"></circle><circle cx="328.3" cy="198.0" r=".72"></circle><circle cx="342.8" cy="198.0" r=".72"></circle><circle cx="357.3" cy="198.0" r=".72"></circle><circle cx="371.9" cy="198.0" r=".72"></circle><circle cx="386.4" cy="198.0" r=".72"></circle><circle cx="415.4" cy="198.0" r=".72"></circle><circle cx="429.9" cy="198.0" r=".72"></circle><circle cx="444.4" cy="198.0" r=".72"></circle><circle cx="458.9" cy="198.0" r=".72"></circle><circle cx="473.4" cy="198.0" r=".72"></circle><circle cx="502.5" cy="198.0" r=".72"></circle><circle cx="517.0" cy="198.0" r=".72"></circle><circle cx="531.5" cy="198.0" r=".72"></circle><circle cx="546.0" cy="198.0" r=".72"></circle><circle cx="560.5" cy="198.0" r=".72"></circle><circle cx="589.5" cy="198.0" r=".72"></circle><circle cx="604.0" cy="198.0" r=".72"></circle><circle cx="618.6" cy="198.0" r=".72"></circle><circle cx="633.1" cy="198.0" r=".72"></circle><circle cx="647.6" cy="198.0" r=".72"></circle><circle cx="676.6" cy="198.0" r=".72"></circle><circle cx="691.1" cy="198.0" r=".72"></circle><circle cx="705.6" cy="198.0" r=".72"></circle><circle cx="720.1" cy="198.0" r=".72"></circle><circle cx="734.6" cy="198.0" r=".72"></circle><circle cx="763.7" cy="198.0" r=".72"></circle><circle cx="778.2" cy="198.0" r=".72"></circle><circle cx="792.7" cy="198.0" r=".72"></circle><circle cx="807.2" cy="198.0" r=".72"></circle><circle cx="821.7" cy="198.0" r=".72"></circle><circle cx="850.7" cy="198.0" r=".72"></circle><circle cx="865.3" cy="198.0" r=".72"></circle><circle cx="879.8" cy="198.0" r=".72"></circle><circle cx="894.3" cy="198.0" r=".72"></circle><circle cx="908.8" cy="198.0" r=".72"></circle><circle cx="937.8" cy="198.0" r=".72"></circle><circle cx="952.3" cy="198.0" r=".72"></circle><circle cx="966.8" cy="198.0" r=".72"></circle><circle cx="981.3" cy="198.0" r=".72"></circle><circle cx="995.9" cy="198.0" r=".72"></circle><circle cx="1024.9" cy="198.0" r=".72"></circle><circle cx="1039.4" cy="198.0" r=".72"></circle><circle cx="1053.9" cy="198.0" r=".72"></circle><circle cx="1068.4" cy="198.0" r=".72"></circle><circle cx="1082.9" cy="198.0" r=".72"></circle><circle cx="1112.0" cy="198.0" r=".72"></circle><circle cx="1126.5" cy="198.0" r=".72"></circle><circle cx="1141.0" cy="198.0" r=".72"></circle><circle cx="1155.5" cy="198.0" r=".72"></circle><circle cx="1170.0" cy="198.0" r=".72"></circle><circle cx="1199.0" cy="198.0" r=".72"></circle><circle cx="67.1" cy="285.0" r=".72"></circle><circle cx="81.6" cy="285.0" r=".72"></circle><circle cx="96.1" cy="285.0" r=".72"></circle><circle cx="110.6" cy="285.0" r=".72"></circle><circle cx="125.2" cy="285.0" r=".72"></circle><circle cx="154.2" cy="285.0" r=".72"></circle><circle cx="168.7" cy="285.0" r=".72"></circle><circle cx="183.2" cy="285.0" r=".72"></circle><circle cx="197.7" cy="285.0" r=".72"></circle><circle cx="212.2" cy="285.0" r=".72"></circle><circle cx="241.3" cy="285.0" r=".72"></circle><circle cx="255.8" cy="285.0" r=".72"></circle><circle cx="270.3" cy="285.0" r=".72"></circle><circle cx="284.8" cy="285.0" r=".72"></circle><circle cx="299.3" cy="285.0" r=".72"></circle><circle cx="328.3" cy="285.0" r=".72"></circle><circle cx="342.8" cy="285.0" r=".72"></circle><circle cx="357.3" cy="285.0" r=".72"></circle><circle cx="371.9" cy="285.0" r=".72"></circle><circle cx="386.4" cy="285.0" r=".72"></circle><circle cx="415.4" cy="285.0" r=".72"></circle><circle cx="429.9" cy="285.0" r=".72"></circle><circle cx="444.4" cy="285.0" r=".72"></circle><circle cx="458.9" cy="285.0" r=".72"></circle><circle cx="473.4" cy="285.0" r=".72"></circle><circle cx="502.5" cy="285.0" r=".72"></circle><circle cx="517.0" cy="285.0" r=".72"></circle><circle cx="531.5" cy="285.0" r=".72"></circle><circle cx="546.0" cy="285.0" r=".72"></circle><circle cx="560.5" cy="285.0" r=".72"></circle><circle cx="589.5" cy="285.0" r=".72"></circle><circle cx="604.0" cy="285.0" r=".72"></circle><circle cx="618.6" cy="285.0" r=".72"></circle><circle cx="633.1" cy="285.0" r=".72"></circle><circle cx="647.6" cy="285.0" r=".72"></circle><circle cx="676.6" cy="285.0" r=".72"></circle><circle cx="691.1" cy="285.0" r=".72"></circle><circle cx="705.6" cy="285.0" r=".72"></circle><circle cx="720.1" cy="285.0" r=".72"></circle><circle cx="734.6" cy="285.0" r=".72"></circle><circle cx="763.7" cy="285.0" r=".72"></circle><circle cx="778.2" cy="285.0" r=".72"></circle><circle cx="792.7" cy="285.0" r=".72"></circle><circle cx="807.2" cy="285.0" r=".72"></circle><circle cx="821.7" cy="285.0" r=".72"></circle><circle cx="850.7" cy="285.0" r=".72"></circle><circle cx="865.3" cy="285.0" r=".72"></circle><circle cx="879.8" cy="285.0" r=".72"></circle><circle cx="894.3" cy="285.0" r=".72"></circle><circle cx="908.8" cy="285.0" r=".72"></circle><circle cx="937.8" cy="285.0" r=".72"></circle><circle cx="952.3" cy="285.0" r=".72"></circle><circle cx="966.8" cy="285.0" r=".72"></circle><circle cx="981.3" cy="285.0" r=".72"></circle><circle cx="995.9" cy="285.0" r=".72"></circle><circle cx="1024.9" cy="285.0" r=".72"></circle><circle cx="1039.4" cy="285.0" r=".72"></circle><circle cx="1053.9" cy="285.0" r=".72"></circle><circle cx="1068.4" cy="285.0" r=".72"></circle><circle cx="1082.9" cy="285.0" r=".72"></circle><circle cx="1112.0" cy="285.0" r=".72"></circle><circle cx="1126.5" cy="285.0" r=".72"></circle><circle cx="1141.0" cy="285.0" r=".72"></circle><circle cx="1155.5" cy="285.0" r=".72"></circle><circle cx="1170.0" cy="285.0" r=".72"></circle><circle cx="1199.0" cy="285.0" r=".72"></circle><circle cx="67.1" cy="372.1" r=".72"></circle><circle cx="81.6" cy="372.1" r=".72"></circle><circle cx="96.1" cy="372.1" r=".72"></circle><circle cx="110.6" cy="372.1" r=".72"></circle><circle cx="125.2" cy="372.1" r=".72"></circle><circle cx="154.2" cy="372.1" r=".72"></circle><circle cx="168.7" cy="372.1" r=".72"></circle><circle cx="183.2" cy="372.1" r=".72"></circle><circle cx="197.7" cy="372.1" r=".72"></circle><circle cx="212.2" cy="372.1" r=".72"></circle><circle cx="241.3" cy="372.1" r=".72"></circle><circle cx="255.8" cy="372.1" r=".72"></circle><circle cx="270.3" cy="372.1" r=".72"></circle><circle cx="284.8" cy="372.1" r=".72"></circle><circle cx="299.3" cy="372.1" r=".72"></circle><circle cx="328.3" cy="372.1" r=".72"></circle><circle cx="342.8" cy="372.1" r=".72"></circle><circle cx="357.3" cy="372.1" r=".72"></circle><circle cx="371.9" cy="372.1" r=".72"></circle><circle cx="386.4" cy="372.1" r=".72"></circle><circle cx="415.4" cy="372.1" r=".72"></circle><circle cx="429.9" cy="372.1" r=".72"></circle><circle cx="444.4" cy="372.1" r=".72"></circle><circle cx="458.9" cy="372.1" r=".72"></circle><circle cx="473.4" cy="372.1" r=".72"></circle><circle cx="502.5" cy="372.1" r=".72"></circle><circle cx="517.0" cy="372.1" r=".72"></circle><circle cx="531.5" cy="372.1" r=".72"></circle><circle cx="546.0" cy="372.1" r=".72"></circle><circle cx="560.5" cy="372.1" r=".72"></circle><circle cx="589.5" cy="372.1" r=".72"></circle><circle cx="604.0" cy="372.1" r=".72"></circle><circle cx="618.6" cy="372.1" r=".72"></circle><circle cx="633.1" cy="372.1" r=".72"></circle><circle cx="647.6" cy="372.1" r=".72"></circle><circle cx="676.6" cy="372.1" r=".72"></circle><circle cx="691.1" cy="372.1" r=".72"></circle><circle cx="705.6" cy="372.1" r=".72"></circle><circle cx="720.1" cy="372.1" r=".72"></circle><circle cx="734.6" cy="372.1" r=".72"></circle><circle cx="763.7" cy="372.1" r=".72"></circle><circle cx="778.2" cy="372.1" r=".72"></circle><circle cx="792.7" cy="372.1" r=".72"></circle><circle cx="807.2" cy="372.1" r=".72"></circle><circle cx="821.7" cy="372.1" r=".72"></circle><circle cx="850.7" cy="372.1" r=".72"></circle><circle cx="865.3" cy="372.1" r=".72"></circle><circle cx="879.8" cy="372.1" r=".72"></circle><circle cx="894.3" cy="372.1" r=".72"></circle><circle cx="908.8" cy="372.1" r=".72"></circle><circle cx="937.8" cy="372.1" r=".72"></circle><circle cx="952.3" cy="372.1" r=".72"></circle><circle cx="966.8" cy="372.1" r=".72"></circle><circle cx="981.3" cy="372.1" r=".72"></circle><circle cx="995.9" cy="372.1" r=".72"></circle><circle cx="1024.9" cy="372.1" r=".72"></circle><circle cx="1039.4" cy="372.1" r=".72"></circle><circle cx="1053.9" cy="372.1" r=".72"></circle><circle cx="1068.4" cy="372.1" r=".72"></circle><circle cx="1082.9" cy="372.1" r=".72"></circle><circle cx="1112.0" cy="372.1" r=".72"></circle><circle cx="1126.5" cy="372.1" r=".72"></circle><circle cx="1141.0" cy="372.1" r=".72"></circle><circle cx="1155.5" cy="372.1" r=".72"></circle><circle cx="1170.0" cy="372.1" r=".72"></circle><circle cx="1199.0" cy="372.1" r=".72"></circle><circle cx="67.1" cy="459.2" r=".72"></circle><circle cx="81.6" cy="459.2" r=".72"></circle><circle cx="96.1" cy="459.2" r=".72"></circle><circle cx="110.6" cy="459.2" r=".72"></circle><circle cx="125.2" cy="459.2" r=".72"></circle><circle cx="154.2" cy="459.2" r=".72"></circle><circle cx="168.7" cy="459.2" r=".72"></circle><circle cx="183.2" cy="459.2" r=".72"></circle><circle cx="197.7" cy="459.2" r=".72"></circle><circle cx="212.2" cy="459.2" r=".72"></circle><circle cx="241.3" cy="459.2" r=".72"></circle><circle cx="255.8" cy="459.2" r=".72"></circle><circle cx="270.3" cy="459.2" r=".72"></circle><circle cx="284.8" cy="459.2" r=".72"></circle><circle cx="299.3" cy="459.2" r=".72"></circle><circle cx="328.3" cy="459.2" r=".72"></circle><circle cx="342.8" cy="459.2" r=".72"></circle><circle cx="371.9" cy="459.2" r=".72"></circle><circle cx="386.4" cy="459.2" r=".72"></circle><circle cx="415.4" cy="459.2" r=".72"></circle><circle cx="429.9" cy="459.2" r=".72"></circle><circle cx="444.4" cy="459.2" r=".72"></circle><circle cx="458.9" cy="459.2" r=".72"></circle><circle cx="473.4" cy="459.2" r=".72"></circle><circle cx="502.5" cy="459.2" r=".72"></circle><circle cx="517.0" cy="459.2" r=".72"></circle><circle cx="531.5" cy="459.2" r=".72"></circle><circle cx="546.0" cy="459.2" r=".72"></circle><circle cx="560.5" cy="459.2" r=".72"></circle><circle cx="589.5" cy="459.2" r=".72"></circle><circle cx="604.0" cy="459.2" r=".72"></circle><circle cx="618.6" cy="459.2" r=".72"></circle><circle cx="633.1" cy="459.2" r=".72"></circle><circle cx="647.6" cy="459.2" r=".72"></circle><circle cx="676.6" cy="459.2" r=".72"></circle><circle cx="691.1" cy="459.2" r=".72"></circle><circle cx="705.6" cy="459.2" r=".72"></circle><circle cx="720.1" cy="459.2" r=".72"></circle><circle cx="734.6" cy="459.2" r=".72"></circle><circle cx="763.7" cy="459.2" r=".72"></circle><circle cx="778.2" cy="459.2" r=".72"></circle><circle cx="792.7" cy="459.2" r=".72"></circle><circle cx="807.2" cy="459.2" r=".72"></circle><circle cx="821.7" cy="459.2" r=".72"></circle><circle cx="850.7" cy="459.2" r=".72"></circle><circle cx="865.3" cy="459.2" r=".72"></circle><circle cx="879.8" cy="459.2" r=".72"></circle><circle cx="894.3" cy="459.2" r=".72"></circle><circle cx="908.8" cy="459.2" r=".72"></circle><circle cx="937.8" cy="459.2" r=".72"></circle><circle cx="952.3" cy="459.2" r=".72"></circle><circle cx="966.8" cy="459.2" r=".72"></circle><circle cx="981.3" cy="459.2" r=".72"></circle><circle cx="995.9" cy="459.2" r=".72"></circle><circle cx="1024.9" cy="459.2" r=".72"></circle><circle cx="1039.4" cy="459.2" r=".72"></circle><circle cx="1053.9" cy="459.2" r=".72"></circle><circle cx="1068.4" cy="459.2" r=".72"></circle><circle cx="1082.9" cy="459.2" r=".72"></circle><circle cx="1112.0" cy="459.2" r=".72"></circle><circle cx="1126.5" cy="459.2" r=".72"></circle><circle cx="1141.0" cy="459.2" r=".72"></circle><circle cx="1155.5" cy="459.2" r=".72"></circle><circle cx="1170.0" cy="459.2" r=".72"></circle><circle cx="1199.0" cy="459.2" r=".72"></circle><circle cx="67.1" cy="546.2" r=".72"></circle><circle cx="81.6" cy="546.2" r=".72"></circle><circle cx="96.1" cy="546.2" r=".72"></circle><circle cx="110.6" cy="546.2" r=".72"></circle><circle cx="125.2" cy="546.2" r=".72"></circle><circle cx="154.2" cy="546.2" r=".72"></circle><circle cx="168.7" cy="546.2" r=".72"></circle><circle cx="183.2" cy="546.2" r=".72"></circle><circle cx="197.7" cy="546.2" r=".72"></circle><circle cx="212.2" cy="546.2" r=".72"></circle><circle cx="241.3" cy="546.2" r=".72"></circle><circle cx="255.8" cy="546.2" r=".72"></circle><circle cx="270.3" cy="546.2" r=".72"></circle><circle cx="284.8" cy="546.2" r=".72"></circle><circle cx="299.3" cy="546.2" r=".72"></circle><circle cx="328.3" cy="546.2" r=".72"></circle><circle cx="342.8" cy="546.2" r=".72"></circle><circle cx="371.9" cy="546.2" r=".72"></circle><circle cx="386.4" cy="546.2" r=".72"></circle><circle cx="415.4" cy="546.2" r=".72"></circle><circle cx="429.9" cy="546.2" r=".72"></circle><circle cx="444.4" cy="546.2" r=".72"></circle><circle cx="458.9" cy="546.2" r=".72"></circle><circle cx="473.4" cy="546.2" r=".72"></circle><circle cx="502.5" cy="546.2" r=".72"></circle><circle cx="517.0" cy="546.2" r=".72"></circle><circle cx="531.5" cy="546.2" r=".72"></circle><circle cx="546.0" cy="546.2" r=".72"></circle><circle cx="560.5" cy="546.2" r=".72"></circle><circle cx="589.5" cy="546.2" r=".72"></circle><circle cx="604.0" cy="546.2" r=".72"></circle><circle cx="618.6" cy="546.2" r=".72"></circle><circle cx="633.1" cy="546.2" r=".72"></circle><circle cx="647.6" cy="546.2" r=".72"></circle><circle cx="676.6" cy="546.2" r=".72"></circle><circle cx="691.1" cy="546.2" r=".72"></circle><circle cx="705.6" cy="546.2" r=".72"></circle><circle cx="720.1" cy="546.2" r=".72"></circle><circle cx="734.6" cy="546.2" r=".72"></circle><circle cx="763.7" cy="546.2" r=".72"></circle><circle cx="778.2" cy="546.2" r=".72"></circle><circle cx="792.7" cy="546.2" r=".72"></circle><circle cx="807.2" cy="546.2" r=".72"></circle><circle cx="821.7" cy="546.2" r=".72"></circle><circle cx="850.7" cy="546.2" r=".72"></circle><circle cx="865.3" cy="546.2" r=".72"></circle><circle cx="879.8" cy="546.2" r=".72"></circle><circle cx="894.3" cy="546.2" r=".72"></circle><circle cx="908.8" cy="546.2" r=".72"></circle><circle cx="937.8" cy="546.2" r=".72"></circle><circle cx="952.3" cy="546.2" r=".72"></circle><circle cx="966.8" cy="546.2" r=".72"></circle><circle cx="981.3" cy="546.2" r=".72"></circle><circle cx="995.9" cy="546.2" r=".72"></circle><circle cx="1024.9" cy="546.2" r=".72"></circle><circle cx="1039.4" cy="546.2" r=".72"></circle><circle cx="1053.9" cy="546.2" r=".72"></circle><circle cx="1068.4" cy="546.2" r=".72"></circle><circle cx="1082.9" cy="546.2" r=".72"></circle><circle cx="1112.0" cy="546.2" r=".72"></circle><circle cx="1126.5" cy="546.2" r=".72"></circle><circle cx="1141.0" cy="546.2" r=".72"></circle><circle cx="1155.5" cy="546.2" r=".72"></circle><circle cx="1170.0" cy="546.2" r=".72"></circle><circle cx="1199.0" cy="546.2" r=".72"></circle><circle cx="67.1" cy="633.3" r=".72"></circle><circle cx="81.6" cy="633.3" r=".72"></circle><circle cx="96.1" cy="633.3" r=".72"></circle><circle cx="110.6" cy="633.3" r=".72"></circle><circle cx="125.2" cy="633.3" r=".72"></circle><circle cx="154.2" cy="633.3" r=".72"></circle><circle cx="168.7" cy="633.3" r=".72"></circle><circle cx="183.2" cy="633.3" r=".72"></circle><circle cx="197.7" cy="633.3" r=".72"></circle><circle cx="212.2" cy="633.3" r=".72"></circle><circle cx="241.3" cy="633.3" r=".72"></circle><circle cx="255.8" cy="633.3" r=".72"></circle><circle cx="270.3" cy="633.3" r=".72"></circle><circle cx="284.8" cy="633.3" r=".72"></circle><circle cx="299.3" cy="633.3" r=".72"></circle><circle cx="328.3" cy="633.3" r=".72"></circle><circle cx="342.8" cy="633.3" r=".72"></circle><circle cx="371.9" cy="633.3" r=".72"></circle><circle cx="386.4" cy="633.3" r=".72"></circle><circle cx="415.4" cy="633.3" r=".72"></circle><circle cx="429.9" cy="633.3" r=".72"></circle><circle cx="444.4" cy="633.3" r=".72"></circle><circle cx="458.9" cy="633.3" r=".72"></circle><circle cx="473.4" cy="633.3" r=".72"></circle><circle cx="502.5" cy="633.3" r=".72"></circle><circle cx="517.0" cy="633.3" r=".72"></circle><circle cx="531.5" cy="633.3" r=".72"></circle><circle cx="546.0" cy="633.3" r=".72"></circle><circle cx="560.5" cy="633.3" r=".72"></circle><circle cx="589.5" cy="633.3" r=".72"></circle><circle cx="604.0" cy="633.3" r=".72"></circle><circle cx="618.6" cy="633.3" r=".72"></circle><circle cx="633.1" cy="633.3" r=".72"></circle><circle cx="647.6" cy="633.3" r=".72"></circle><circle cx="676.6" cy="633.3" r=".72"></circle><circle cx="691.1" cy="633.3" r=".72"></circle><circle cx="705.6" cy="633.3" r=".72"></circle><circle cx="720.1" cy="633.3" r=".72"></circle><circle cx="734.6" cy="633.3" r=".72"></circle><circle cx="763.7" cy="633.3" r=".72"></circle><circle cx="778.2" cy="633.3" r=".72"></circle><circle cx="792.7" cy="633.3" r=".72"></circle><circle cx="807.2" cy="633.3" r=".72"></circle><circle cx="821.7" cy="633.3" r=".72"></circle><circle cx="850.7" cy="633.3" r=".72"></circle><circle cx="865.3" cy="633.3" r=".72"></circle><circle cx="879.8" cy="633.3" r=".72"></circle><circle cx="894.3" cy="633.3" r=".72"></circle><circle cx="908.8" cy="633.3" r=".72"></circle><circle cx="937.8" cy="633.3" r=".72"></circle><circle cx="952.3" cy="633.3" r=".72"></circle><circle cx="966.8" cy="633.3" r=".72"></circle><circle cx="981.3" cy="633.3" r=".72"></circle><circle cx="995.9" cy="633.3" r=".72"></circle><circle cx="1024.9" cy="633.3" r=".72"></circle><circle cx="1039.4" cy="633.3" r=".72"></circle><circle cx="1053.9" cy="633.3" r=".72"></circle><circle cx="1068.4" cy="633.3" r=".72"></circle><circle cx="1082.9" cy="633.3" r=".72"></circle><circle cx="1112.0" cy="633.3" r=".72"></circle><circle cx="1126.5" cy="633.3" r=".72"></circle><circle cx="1141.0" cy="633.3" r=".72"></circle><circle cx="1155.5" cy="633.3" r=".72"></circle><circle cx="1170.0" cy="633.3" r=".72"></circle><circle cx="1199.0" cy="633.3" r=".72"></circle><circle cx="67.1" cy="720.4" r=".72"></circle><circle cx="81.6" cy="720.4" r=".72"></circle><circle cx="96.1" cy="720.4" r=".72"></circle><circle cx="110.6" cy="720.4" r=".72"></circle><circle cx="125.2" cy="720.4" r=".72"></circle><circle cx="154.2" cy="720.4" r=".72"></circle><circle cx="168.7" cy="720.4" r=".72"></circle><circle cx="183.2" cy="720.4" r=".72"></circle><circle cx="197.7" cy="720.4" r=".72"></circle><circle cx="212.2" cy="720.4" r=".72"></circle><circle cx="241.3" cy="720.4" r=".72"></circle><circle cx="255.8" cy="720.4" r=".72"></circle><circle cx="270.3" cy="720.4" r=".72"></circle><circle cx="284.8" cy="720.4" r=".72"></circle><circle cx="299.3" cy="720.4" r=".72"></circle><circle cx="328.3" cy="720.4" r=".72"></circle><circle cx="342.8" cy="720.4" r=".72"></circle><circle cx="371.9" cy="720.4" r=".72"></circle><circle cx="386.4" cy="720.4" r=".72"></circle><circle cx="415.4" cy="720.4" r=".72"></circle><circle cx="429.9" cy="720.4" r=".72"></circle><circle cx="444.4" cy="720.4" r=".72"></circle><circle cx="458.9" cy="720.4" r=".72"></circle><circle cx="473.4" cy="720.4" r=".72"></circle><circle cx="502.5" cy="720.4" r=".72"></circle><circle cx="517.0" cy="720.4" r=".72"></circle><circle cx="531.5" cy="720.4" r=".72"></circle><circle cx="546.0" cy="720.4" r=".72"></circle><circle cx="560.5" cy="720.4" r=".72"></circle><circle cx="589.5" cy="720.4" r=".72"></circle><circle cx="604.0" cy="720.4" r=".72"></circle><circle cx="618.6" cy="720.4" r=".72"></circle><circle cx="633.1" cy="720.4" r=".72"></circle><circle cx="647.6" cy="720.4" r=".72"></circle><circle cx="676.6" cy="720.4" r=".72"></circle><circle cx="691.1" cy="720.4" r=".72"></circle><circle cx="705.6" cy="720.4" r=".72"></circle><circle cx="720.1" cy="720.4" r=".72"></circle><circle cx="734.6" cy="720.4" r=".72"></circle><circle cx="763.7" cy="720.4" r=".72"></circle><circle cx="778.2" cy="720.4" r=".72"></circle><circle cx="792.7" cy="720.4" r=".72"></circle><circle cx="807.2" cy="720.4" r=".72"></circle><circle cx="821.7" cy="720.4" r=".72"></circle><circle cx="850.7" cy="720.4" r=".72"></circle><circle cx="865.3" cy="720.4" r=".72"></circle><circle cx="879.8" cy="720.4" r=".72"></circle><circle cx="894.3" cy="720.4" r=".72"></circle><circle cx="908.8" cy="720.4" r=".72"></circle><circle cx="937.8" cy="720.4" r=".72"></circle><circle cx="952.3" cy="720.4" r=".72"></circle><circle cx="966.8" cy="720.4" r=".72"></circle><circle cx="981.3" cy="720.4" r=".72"></circle><circle cx="995.9" cy="720.4" r=".72"></circle><circle cx="1024.9" cy="720.4" r=".72"></circle><circle cx="1039.4" cy="720.4" r=".72"></circle><circle cx="1053.9" cy="720.4" r=".72"></circle><circle cx="1068.4" cy="720.4" r=".72"></circle><circle cx="1082.9" cy="720.4" r=".72"></circle><circle cx="1112.0" cy="720.4" r=".72"></circle><circle cx="1126.5" cy="720.4" r=".72"></circle><circle cx="1141.0" cy="720.4" r=".72"></circle><circle cx="1155.5" cy="720.4" r=".72"></circle><circle cx="1170.0" cy="720.4" r=".72"></circle><circle cx="1199.0" cy="720.4" r=".72"></circle></g></svg>
<div class="a" style="left:1213.00px;top:110.00px;width:9.00px;height:653.00px;background:linear-gradient(90deg,#e9e9e9,#f6f6f6 45%,#fff);"></div>
<div class="a" style="left:41.00px;top:110.00px;width:12.00px;height:862.00px;background:linear-gradient(90deg,#f4f4f4,#fbfbfb 60%,#fff);"></div>
<div class="a" style="left:0.00px;top:110.00px;width:3.00px;height:40.00px;background:#117865;"></div>
<svg class="a" style="left:12.00px;top:122.00px;" width="18" height="16" viewBox="0 0 18 16"><g fill="none" stroke="#252423" stroke-width="1.200"><path d="M1.500 1v14h15"></path><rect x="4" y="7" width="2.500" height="6"></rect><rect x="8" y="4" width="2.500" height="9"></rect><rect x="12" y="2" width="2.500" height="11"></rect></g></svg>
<svg class="a" style="left:12.00px;top:162.00px;" width="18" height="16" viewBox="0 0 18 16"><g fill="none" stroke="#3b3a39" stroke-width="1.100"><rect x="1" y="1" width="15.500" height="14"></rect><path d="M1 5.500h15.500M1 10.200h15.500M6.200 1v14M11.400 1v14"></path></g></svg>
<svg class="a" style="left:12.00px;top:201.00px;" width="19" height="18" viewBox="0 0 19 18"><g fill="none" stroke="#3b3a39" stroke-width="1.100"><rect x="9.500" y="1" width="8" height="5"></rect><rect x="1" y="6.500" width="6.500" height="6"></rect><rect x="9.500" y="11.500" width="8" height="5.500"></rect><path d="M9.500 3.500h-2.500v10.500h2.500M7 9.500h2.500M9.500 8.500h8M9.500 14h8"></path></g></svg>
<svg class="a" style="left:10.00px;top:241.00px;" width="20" height="19" viewBox="0 0 20 19"><g fill="none" stroke="#605e5c" stroke-width="1.100"><path d="M4.500 10.500v-9h8l5 5v11h-2M12.500 1.500v5h5"></path></g></svg>
<div class="t" style="left: 10.5px; top: 252.05px; font-size: 6.5px; color: rgb(59, 58, 57); font-weight: bold; transform: scaleX(1.0557); transform-origin: 0px 0px;">DAX</div>
<div class="card" style="left:53px;top:110px;width:210px;height:80px"></div>
<div class="t" style="left: 68.3px; top: 121.05px; font-size: 11.5px; color: rgb(37, 36, 35); transform: scaleX(0.9255); transform-origin: 0px 0px;">Start Time</div>
<svg class="a" style="left:238.50px;top:121.00px;" width="10" height="6" viewBox="0 0 10 6"><path d="M0.800 0.800l4 4 4-4" fill="none" stroke="#605e5c" stroke-width="1"></path></svg>
<div class="a" style="left:66px;top:139px;width:183px;height:23.500px;border:1px solid #ececec;background:#fff"></div>
<div class="t" style="left: 71.7px; top: 147.3px; font-size: 12px; color: rgb(96, 94, 92); transform: scaleX(0.9368); transform-origin: 0px 0px;">All</div>
<svg class="a" style="left:232.00px;top:148.00px;" width="14" height="8" viewBox="0 0 14 8"><path d="M0.800 0.800l6 6 6-6" fill="none" stroke="#605e5c" stroke-width="1"></path></svg>
<div class="card" style="left:271px;top:110px;width:305px;height:80px"></div>
<div class="t" style="left: 279.8px; top: 116.85px; font-size: 14.5px; color: rgb(14, 14, 14); font-weight: bold; transform: scaleX(0.9804); transform-origin: 0px 0px;">Count of Vehicle Type by Vehicle Type</div>
<div class="a" style="left:279.80px;top:137.80px;width:89.10px;height:43.00px;background:#4a8ddc;"></div>
<div class="a" style="left:371.20px;top:137.80px;width:86.80px;height:43.00px;background:#4a5d8c;"></div>
<div class="a" style="left:460.10px;top:137.80px;width:74.00px;height:43.00px;background:#f2c811;"></div>
<div class="a" style="left:536.20px;top:137.80px;width:16.00px;height:43.00px;background:#e0504e;"></div>
<div class="a" style="left:554.30px;top:137.80px;width:12.90px;height:43.00px;background:#36ae85;"></div>
<div class="t" style="left: 283.5px; top: 143.85px; font-size: 10.5px; color: rgb(255, 255, 255); transform: scaleX(1.0573); transform-origin: 0px 0px;">Dumper</div>
<div class="t" style="left: 374.5px; top: 143.85px; font-size: 10.5px; color: rgb(255, 255, 255); transform: scaleX(0.9853); transform-origin: 0px 0px;">Excavator</div>
<div class="t" style="left: 464px; top: 143.85px; font-size: 10.5px; color: rgb(255, 247, 200); transform: scaleX(0.9532); transform-origin: 0px 0px;">Trailer</div>
<div class="card" style="left:53px;top:197px;width:297px;height:246px"></div>
<div class="t" style="left: 61.7px; top: 204.05px; font-size: 14.5px; color: rgb(14, 14, 14); font-weight: bold; transform: scaleX(1.0071); transform-origin: 0px 0px;">Sum of Working Time in Minute by Veh...</div>
<div class="t" style="left: 61.7px; top: 233.65px; font-size: 9.3px; color: rgb(85, 82, 79); -webkit-text-stroke: 0.12px rgb(85, 82, 79); transform: scaleX(1.0197); transform-origin: 0px 0px;">Vehicle Type</div>
<div class="a" style="left:122.90px;top:232.60px;width:8.8px;height:8.8px;border-radius:50%;background:#4a8ddc"></div>
<div class="t" style="left: 133.3px; top: 233.65px; font-size: 9.3px; color: rgb(96, 94, 92); transform: scaleX(1.0339); transform-origin: 0px 0px;">Dumper</div>
<div class="a" style="left:171.90px;top:232.60px;width:8.8px;height:8.8px;border-radius:50%;background:#4a5378"></div>
<div class="t" style="left: 183px; top: 233.65px; font-size: 9.3px; color: rgb(96, 94, 92); transform: scaleX(0.9748); transform-origin: 0px 0px;">Excavator</div>
<div class="a" style="left:227.80px;top:232.60px;width:8.8px;height:8.8px;border-radius:50%;background:#36ae85"></div>
<div class="t" style="left: 238.3px; top: 233.65px; font-size: 9.3px; color: rgb(96, 94, 92); transform: scaleX(1.0201); transform-origin: 0px 0px;">Generator</div>
<div class="a" style="left:141.00px;top:258.00px;width:1.00px;height:155.00px;background:#efefef;"></div>
<div class="a" style="left:270.50px;top:258.00px;width:1.00px;height:155.00px;background:#f4f4f4;"></div>
<div class="a" style="left:141.00px;top:267.00px;width:146.60px;height:21.80px;background:#4a8ddc;"></div>
<div class="t" style="left: 86.6px; top: 274.35px; font-size: 9.3px; color: rgb(96, 94, 92); transform: scaleX(0.9587); transform-origin: 0px 0px;">KL45E5596</div>
<div class="a" style="left:141.00px;top:295.60px;width:93.20px;height:21.80px;background:#4a5d8c;"></div>
<div class="t" style="left: 75.7px; top: 302.95px; font-size: 9.3px; color: rgb(96, 94, 92); transform: scaleX(0.9147); transform-origin: 0px 0px;">EXCAVATOR...</div>
<div class="a" style="left:141.00px;top:324.20px;width:91.60px;height:21.50px;background:#4a5d8c;"></div>
<div class="t" style="left: 75.7px; top: 331.4px; font-size: 9.3px; color: rgb(96, 94, 92); transform: scaleX(0.9147); transform-origin: 0px 0px;">EXCAVATOR...</div>
<div class="a" style="left:141.00px;top:352.50px;width:61.00px;height:21.40px;background:#36ae85;"></div>
<div class="t" style="left: 73.7px; top: 359.65px; font-size: 9.3px; color: rgb(96, 94, 92); transform: scaleX(0.9784); transform-origin: 0px 0px;">DG-125 KVA...</div>
<div class="a" style="left:141.00px;top:381.00px;width:49.00px;height:21.60px;background:#4a5d8c;"></div>
<div class="t" style="left: 75.7px; top: 388.25px; font-size: 9.3px; color: rgb(96, 94, 92); transform: scaleX(0.9147); transform-origin: 0px 0px;">EXCAVATOR...</div>
<div class="t" style="left: 136px; top: 419.95px; font-size: 9.3px; color: rgb(96, 94, 92); transform: scaleX(0.967); transform-origin: 0px 0px;">0K</div>
<div class="t" style="left: 262.75px; top: 419.95px; font-size: 9.3px; color: rgb(96, 94, 92); transform: scaleX(0.9367); transform-origin: 0px 0px;">10K</div>
<div class="card" style="left:358px;top:197px;width:479px;height:246px"></div>
<div class="t" style="left: 367px; top: 204.05px; font-size: 14.5px; color: rgb(14, 14, 14); font-weight: bold; transform: scaleX(0.9958); transform-origin: 0px 0px;">Average of Fuel Consumed(L) and Average of Working Time in Mi...</div>
<div class="a" style="left:366.50px;top:232.70px;width:8.6px;height:8.6px;border-radius:50%;background:#4a8ddc"></div>
<div class="t" style="left: 377.9px; top: 233.85px; font-size: 9.3px; color: rgb(96, 94, 92); transform: scaleX(1.0002); transform-origin: 0px 0px;">Average of Fuel Consumed(L)</div>
<div class="a" style="left:507.20px;top:232.70px;width:8.6px;height:8.6px;border-radius:50%;background:#4a5378"></div>
<div class="t" style="left: 518px; top: 233.85px; font-size: 9.3px; color: rgb(96, 94, 92); transform: scaleX(1.0426); transform-origin: 0px 0px;">Average of Working Time in Minute</div>
<div class="a" style="left:388.50px;top:256.90px;width:417.20px;height:1.00px;background:#e9e9e9;"></div>
<div class="t" style="left: 366.46px; top: 253.25px; font-size: 9.3px; color: rgb(96, 94, 92);">60</div>
<div class="t" style="left: 812.2px; top: 253.25px; font-size: 9.3px; color: rgb(96, 94, 92); transform: scaleX(1.0119); transform-origin: 0px 0px;">500</div>
<div class="a" style="left:388.50px;top:308.90px;width:417.20px;height:1.00px;background:#e9e9e9;"></div>
<div class="t" style="left: 366.46px; top: 305.25px; font-size: 9.3px; color: rgb(96, 94, 92);">40</div>
<div class="t" style="left: 812.2px; top: 305.25px; font-size: 9.3px; color: rgb(96, 94, 92); transform: scaleX(1.0119); transform-origin: 0px 0px;">400</div>
<div class="a" style="left:388.50px;top:361.00px;width:417.20px;height:1.00px;background:#e9e9e9;"></div>
<div class="t" style="left: 366.46px; top: 357.35px; font-size: 9.3px; color: rgb(96, 94, 92);">20</div>
<div class="t" style="left: 812.2px; top: 357.35px; font-size: 9.3px; color: rgb(96, 94, 92); transform: scaleX(1.0119); transform-origin: 0px 0px;">300</div>
<div class="a" style="left:388.50px;top:412.90px;width:417.20px;height:1.00px;background:#e9e9e9;"></div>
<div class="t" style="left: 371.63px; top: 409.25px; font-size: 9.3px; color: rgb(96, 94, 92);">0</div>
<div class="t" style="left: 812.2px; top: 409.25px; font-size: 9.3px; color: rgb(96, 94, 92); transform: scaleX(1.0119); transform-origin: 0px 0px;">200</div>
<div class="a" style="left:415.90px;top:275.40px;width:57.30px;height:138.00px;background:#4a8ddc;"></div>
<div class="a" style="left:490.10px;top:291.00px;width:57.80px;height:122.40px;background:#4a8ddc;"></div>
<div class="a" style="left:564.80px;top:378.30px;width:57.30px;height:35.10px;background:#4a8ddc;"></div>
<div class="a" style="left:639.00px;top:389.50px;width:57.90px;height:23.90px;background:#4a8ddc;"></div>
<svg class="a" style="left:0;top:0" width="900" height="450" viewBox="0 0 900 450"><polyline points="445.600,371 519.800,261.100 594.800,378.800 668.200,407.700 743.800,403" fill="none" stroke="#4a5378" stroke-width="1.400"></polyline></svg>
<div class="t" style="left: 425.35px; top: 419.75px; font-size: 9.3px; color: rgb(96, 94, 92); transform: scaleX(0.9796); transform-origin: 0px 0px;">Excavator</div>
<div class="t" style="left: 498.3px; top: 419.75px; font-size: 9.3px; color: rgb(96, 94, 92); transform: scaleX(1.0272); transform-origin: 0px 0px;">Generator</div>
<div class="t" style="left: 577.35px; top: 419.75px; font-size: 9.3px; color: rgb(96, 94, 92); transform: scaleX(1.043); transform-origin: 0px 0px;">Dumper</div>
<div class="t" style="left: 655.3px; top: 419.75px; font-size: 9.3px; color: rgb(96, 94, 92); transform: scaleX(1.0378); transform-origin: 0px 0px;">Tipper</div>
<div class="t" style="left: 730.6px; top: 419.75px; font-size: 9.3px; color: rgb(96, 94, 92); transform: scaleX(1); transform-origin: 0px 0px;">Trailer</div>
<div class="card" style="left:53px;top:451px;width:295px;height:311px"></div>
<div class="t" style="left: 61.7px; top: 458.35px; font-size: 14.5px; color: rgb(14, 14, 14); font-weight: bold; transform: scaleX(0.9833); transform-origin: 0px 0px;">Sum of Distance Travelled(kms) by Vehi...</div>
<svg class="a" style="left:0;top:0" width="360" height="770" viewBox="0 0 360 770"><path d="M201.40 527.50A88.7 88.7 0 0 1 241.81 537.24L225.68 568.75A53.3 53.3 0 0 0 201.40 562.90Z" fill="#4a8ddc" stroke="#4a8ddc" stroke-width=".4"></path><path d="M241.81 537.24A88.7 88.7 0 0 1 272.79 563.56L244.30 584.57A53.3 53.3 0 0 0 225.68 568.75Z" fill="#4a5d8c" stroke="#4a5d8c" stroke-width=".4"></path><path d="M272.79 563.56A88.7 88.7 0 0 1 287.20 593.69L252.96 602.67A53.3 53.3 0 0 0 244.30 584.57Z" fill="#f2c811" stroke="#f2c811" stroke-width=".4"></path><path d="M287.20 593.69A88.7 88.7 0 0 1 289.79 623.62L254.51 620.66A53.3 53.3 0 0 0 252.96 602.67Z" fill="#e0504e" stroke="#e0504e" stroke-width=".4"></path><path d="M289.79 623.62A88.7 88.7 0 0 1 282.56 651.99L250.17 637.71A53.3 53.3 0 0 0 254.51 620.66Z" fill="#2eaa7d" stroke="#2eaa7d" stroke-width=".4"></path><path d="M282.56 651.99A88.7 88.7 0 0 1 266.27 676.69L240.38 652.55A53.3 53.3 0 0 0 250.17 637.71Z" fill="#8cc4f0" stroke="#8cc4f0" stroke-width=".4"></path><path d="M266.27 676.69A88.7 88.7 0 0 1 243.86 694.08L226.91 663.00A53.3 53.3 0 0 0 240.38 652.55Z" fill="#e08c4c" stroke="#e08c4c" stroke-width=".4"></path><path d="M243.86 694.08A88.7 88.7 0 0 1 220.14 702.90L212.66 668.30A53.3 53.3 0 0 0 226.91 663.00Z" fill="#9650a8" stroke="#9650a8" stroke-width=".4"></path><path d="M220.14 702.90A88.7 88.7 0 0 1 195.21 704.68L197.68 669.37A53.3 53.3 0 0 0 212.66 668.30Z" fill="#5c98e2" stroke="#5c98e2" stroke-width=".4"></path><path d="M195.21 704.68A88.7 88.7 0 0 1 170.34 699.28L182.73 666.12A53.3 53.3 0 0 0 197.68 669.37Z" fill="#6272a4" stroke="#6272a4" stroke-width=".4"></path><path d="M170.34 699.28A88.7 88.7 0 0 1 148.02 687.04L169.32 658.77A53.3 53.3 0 0 0 182.73 666.12Z" fill="#f5d23c" stroke="#f5d23c" stroke-width=".4"></path><path d="M148.02 687.04A88.7 88.7 0 0 1 132.76 672.38L160.15 649.96A53.3 53.3 0 0 0 169.32 658.77Z" fill="#ea6a6a" stroke="#ea6a6a" stroke-width=".4"></path><path d="M132.76 672.38A88.7 88.7 0 0 1 121.34 654.39L153.29 639.15A53.3 53.3 0 0 0 160.15 649.96Z" fill="#4ab894" stroke="#4ab894" stroke-width=".4"></path><path d="M121.34 654.39A88.7 88.7 0 0 1 114.54 634.19L149.21 627.01A53.3 53.3 0 0 0 153.29 639.15Z" fill="#a4d0f3" stroke="#a4d0f3" stroke-width=".4"></path><path d="M114.54 634.19A88.7 88.7 0 0 1 112.75 619.30L148.13 618.06A53.3 53.3 0 0 0 149.21 627.01Z" fill="#eaa87c" stroke="#eaa87c" stroke-width=".4"></path><path d="M112.75 619.30A88.7 88.7 0 0 1 113.19 606.93L148.39 610.63A53.3 53.3 0 0 0 148.13 618.06Z" fill="#a880c0" stroke="#a880c0" stroke-width=".4"></path><path d="M113.19 606.93A88.7 88.7 0 0 1 115.33 594.74L149.68 603.31A53.3 53.3 0 0 0 148.39 610.63Z" fill="#3f73b8" stroke="#3f73b8" stroke-width=".4"></path><path d="M115.33 594.74A88.7 88.7 0 0 1 119.16 582.97L151.98 596.23A53.3 53.3 0 0 0 149.68 603.31Z" fill="#38436d" stroke="#38436d" stroke-width=".4"></path><path d="M119.16 582.97A88.7 88.7 0 0 1 124.58 571.85L155.24 589.55A53.3 53.3 0 0 0 151.98 596.23Z" fill="#d9a81a" stroke="#d9a81a" stroke-width=".4"></path><path d="M124.58 571.85A88.7 88.7 0 0 1 130.56 562.82L158.83 584.12A53.3 53.3 0 0 0 155.24 589.55Z" fill="#c0483e" stroke="#c0483e" stroke-width=".4"></path><path d="M130.56 562.82A88.7 88.7 0 0 1 138.68 553.48L163.71 578.51A53.3 53.3 0 0 0 158.83 584.12Z" fill="#258a66" stroke="#258a66" stroke-width=".4"></path><path d="M138.68 553.48A88.7 88.7 0 0 1 148.02 545.36L169.32 573.63A53.3 53.3 0 0 0 163.71 578.51Z" fill="#7a9cc7" stroke="#7a9cc7" stroke-width=".4"></path><path d="M148.02 545.36A88.7 88.7 0 0 1 158.40 538.62L175.56 569.58A53.3 53.3 0 0 0 169.32 573.63Z" fill="#b87a4a" stroke="#b87a4a" stroke-width=".4"></path><path d="M158.40 538.62A88.7 88.7 0 0 1 168.17 533.96L181.43 566.78A53.3 53.3 0 0 0 175.56 569.58Z" fill="#7a4289" stroke="#7a4289" stroke-width=".4"></path><path d="M168.17 533.96A88.7 88.7 0 0 1 177.70 530.73L187.16 564.84A53.3 53.3 0 0 0 181.43 566.78Z" fill="#2a548a" stroke="#2a548a" stroke-width=".4"></path><path d="M177.70 530.73A88.7 88.7 0 0 1 185.54 528.93L191.87 563.76A53.3 53.3 0 0 0 187.16 564.84Z" fill="#232d52" stroke="#232d52" stroke-width=".4"></path><path d="M185.54 528.93A88.7 88.7 0 0 1 190.59 528.16L194.90 563.30A53.3 53.3 0 0 0 191.87 563.76Z" fill="#9c8a17" stroke="#9c8a17" stroke-width=".4"></path><path d="M190.59 528.16A88.7 88.7 0 0 1 194.75 527.75L197.40 563.05A53.3 53.3 0 0 0 194.90 563.30Z" fill="#8c2f2f" stroke="#8c2f2f" stroke-width=".4"></path><path d="M194.75 527.75A88.7 88.7 0 0 1 198.77 527.54L199.82 562.92A53.3 53.3 0 0 0 197.40 563.05Z" fill="#1a6a4e" stroke="#1a6a4e" stroke-width=".4"></path><path d="M198.77 527.54A88.7 88.7 0 0 1 201.40 527.50L201.40 562.90A53.3 53.3 0 0 0 199.82 562.92Z" fill="#8a8a8a" stroke="#8a8a8a" stroke-width=".4"></path><g fill="none" stroke="#c4c4c4" stroke-width=".9"><polyline points="222.2,529.5 224.9,518.5 236.4,518.5"></polyline><polyline points="254.6,544.6 259.1,538.6 277.5,538.6"></polyline><polyline points="276.3,567.8 282.6,563.7 299.4,563.7"></polyline><polyline points="289.1,599.7 296.4,598.3 312.4,598.3"></polyline><polyline points="285.5,646.0 292.5,648.5 308.3,648.5"></polyline><polyline points="270.3,672.8 276.1,677.6 292.7,677.6"></polyline><polyline points="246.7,693.0 250.5,699.5 268.6,699.5"></polyline><polyline points="219.0,703.6 220.5,711.0 241.8,711.0"></polyline><polyline points="174.5,531.2 172.2,524.0 148.0,524.0"></polyline><polyline points="146.7,545.7 142.1,539.8 124.5,539.8"></polyline><polyline points="130.4,562.1 124.5,557.6 107.3,557.6"></polyline><polyline points="123.8,572.3 117.2,568.6 101.0,568.6"></polyline><polyline points="118.1,584.2 111.1,581.5 95.4,581.5"></polyline><polyline points="114.4,596.6 107.1,595.0 92.0,595.0"></polyline><polyline points="112.5,609.4 105.0,608.8 89.9,608.8"></polyline><polyline points="113.5,631.4 106.1,632.7 91.0,632.7"></polyline><polyline points="117.1,645.4 110.0,647.9 95.4,647.9"></polyline><polyline points="123.7,660.0 117.2,663.7 101.7,663.7"></polyline><polyline points="137.4,678.4 132.1,683.6 116.2,683.6"></polyline><polyline points="162.7,696.5 159.4,703.3 141.9,703.3"></polyline><polyline points="195.2,705.2 194.5,715.5 189.7,715.5"></polyline></g></svg>
<div class="t" style="left: 239.4px; top: 513.9px; font-size: 9.6px; color: rgb(122, 122, 122); letter-spacing: 0.3px; transform: scaleX(0.9496); transform-origin: 0px 0px;">KL24H7272</div>
<div class="t" style="left: 280.5px; top: 534px; font-size: 9.6px; color: rgb(122, 122, 122); letter-spacing: 0.3px; transform: scaleX(0.9404); transform-origin: 0px 0px;">KL02AZ4499</div>
<div class="t" style="left: 302.4px; top: 559.1px; font-size: 9.6px; color: rgb(122, 122, 122); letter-spacing: 0.3px; transform: scaleX(0.8727); transform-origin: 0px 0px;">KL11B...</div>
<div class="t" style="left: 315.4px; top: 593.7px; font-size: 9.6px; color: rgb(122, 122, 122); letter-spacing: 0.3px; transform: scaleX(0.8409); transform-origin: 0px 0px;">KL0...</div>
<div class="t" style="left: 311.3px; top: 643.9px; font-size: 9.6px; color: rgb(122, 122, 122); letter-spacing: 0.3px; transform: scaleX(0.8519); transform-origin: 0px 0px;">KL64...</div>
<div class="t" style="left: 295.7px; top: 673px; font-size: 9.6px; color: rgb(122, 122, 122); letter-spacing: 0.3px; transform: scaleX(0.8788); transform-origin: 0px 0px;">KL02AP0...</div>
<div class="t" style="left: 271.6px; top: 694.9px; font-size: 9.6px; color: rgb(122, 122, 122); letter-spacing: 0.3px; transform: scaleX(0.9057); transform-origin: 0px 0px;">KL12E4505 (T...</div>
<div class="t" style="left: 244.8px; top: 706.4px; font-size: 9.6px; color: rgb(122, 122, 122); letter-spacing: 0.3px; transform: scaleX(0.9125); transform-origin: 0px 0px;">KL42E4059 (TRAILER)</div>
<div class="t" style="left: 63.8px; top: 519.4px; font-size: 9.6px; color: rgb(122, 122, 122); letter-spacing: 0.3px; transform: scaleX(0.8846); transform-origin: 0px 0px;">KL07U8955 (TRAI...</div>
<div class="t" style="left: 69.7px; top: 535.2px; font-size: 9.6px; color: rgb(122, 122, 122); letter-spacing: 0.3px; transform: scaleX(0.9513); transform-origin: 0px 0px;">KL42M5270</div>
<div class="t" style="left: 66px; top: 553px; font-size: 9.6px; color: rgb(122, 122, 122); letter-spacing: 0.3px; transform: scaleX(0.8441); transform-origin: 0px 0px;">KL26C0...</div>
<div class="t" style="left: 63.8px; top: 564px; font-size: 9.6px; color: rgb(122, 122, 122); letter-spacing: 0.3px; transform: scaleX(0.8607); transform-origin: 0px 0px;">KL41H...</div>
<div class="t" style="left: 64.7px; top: 576.9px; font-size: 9.6px; color: rgb(122, 122, 122); letter-spacing: 0.3px; transform: scaleX(0.8519); transform-origin: 0px 0px;">KL17...</div>
<div class="t" style="left: 66.3px; top: 590.4px; font-size: 9.6px; color: rgb(122, 122, 122); letter-spacing: 0.3px; transform: scaleX(0.8447); transform-origin: 0px 0px;">KL0...</div>
<div class="t" style="left: 64.3px; top: 604.2px; font-size: 9.6px; color: rgb(122, 122, 122); letter-spacing: 0.3px; transform: scaleX(0.8409); transform-origin: 0px 0px;">KL0...</div>
<div class="t" style="left: 65.2px; top: 628.1px; font-size: 9.6px; color: rgb(122, 122, 122); letter-spacing: 0.3px; transform: scaleX(0.8484); transform-origin: 0px 0px;">KL0...</div>
<div class="t" style="left: 63.8px; top: 643.3px; font-size: 9.6px; color: rgb(122, 122, 122); letter-spacing: 0.3px; transform: scaleX(0.8796); transform-origin: 0px 0px;">KL57...</div>
<div class="t" style="left: 64.3px; top: 659.1px; font-size: 9.6px; color: rgb(122, 122, 122); letter-spacing: 0.3px; transform: scaleX(0.8657); transform-origin: 0px 0px;">KL16N...</div>
<div class="t" style="left: 62.3px; top: 679px; font-size: 9.6px; color: rgb(122, 122, 122); letter-spacing: 0.3px; transform: scaleX(0.9534); transform-origin: 0px 0px;">KL45D5336</div>
<div class="t" style="left: 65.6px; top: 698.7px; font-size: 9.6px; color: rgb(122, 122, 122); letter-spacing: 0.3px; transform: scaleX(0.8925); transform-origin: 0px 0px;">KL17H1364 (TR...</div>
<div class="t" style="left: 86.2px; top: 710.9px; font-size: 9.6px; color: rgb(122, 122, 122); letter-spacing: 0.3px; transform: scaleX(0.9152); transform-origin: 0px 0px;">KL11AJ1929 (TRAILER)</div>
<div class="a" style="left:358px;top:458px;width:855px;height:305px;background:#fff;border:1px solid #d2d0ce;box-shadow:1px 2px 3px rgba(0,0,0,.22)"></div>
<div class="a" style="left:603.80px;top:489.60px;width:364.60px;height:272.00px;background:#f5f5f5;"></div>
<div class="a" style="left:603.80px;top:555.50px;width:364.60px;height:1.40px;background:#fff;"></div>
<div class="a" style="left:603.80px;top:622.80px;width:364.60px;height:1.40px;background:#fff;"></div>
<div class="a" style="left:603.80px;top:689.10px;width:364.60px;height:1.40px;background:#fff;"></div>
<svg class="a" style="left:0;top:0" width="1000" height="770" viewBox="0 0 1000 770"><polyline points="603.300,646 655.300,687.800 707.200,675.400 760.700,681.800 814.300,563.900 866.200,559.900 917.500,574.600 968.400,564.600" fill="none" stroke="#d6d6d6" stroke-width="2.600" stroke-linejoin="round"></polyline></svg>
<svg class="a" style="left:364.00px;top:464.50px;" width="16" height="16" viewBox="0 0 16 16"><g fill="none" stroke="#3b3a39" stroke-width="1"><circle cx="8" cy="8" r="6.800"></circle></g><rect x="7.500" y="7" width="1" height="4.500" fill="#3b3a39"></rect><rect x="7.500" y="4.500" width="1" height="1.200" fill="#3b3a39"></rect></svg>
<div class="t" style="left: 386.6px; top: 467.5px; font-size: 11px; color: rgb(46, 45, 44); transform: scaleX(0.99); transform-origin: 0px 0px;">Select or drag fields to populate this visual</div>
<div class="a" style="left:780.00px;top:457.00px;width:12.00px;height:4.00px;background:#8e8e8e;"></div>
<div class="a" style="left:780.00px;top:760.00px;width:12.00px;height:4.00px;background:#8e8e8e;"></div>
<div class="a" style="left:357.00px;top:605.00px;width:4.00px;height:12.00px;background:#8e8e8e;"></div>
<div class="a" style="left:1210.50px;top:605.00px;width:4.00px;height:12.00px;background:#8e8e8e;"></div>
<svg class="a" style="left:0;top:0" width="1230" height="770" viewBox="0 0 1230 770"><g fill="none" stroke="#8e8e8e" stroke-width="2.200"><path d="M358.500 466.500v-8h8.500M1204 458.500h8v8M358.500 754v8h8.500M1204 762h8v-8"></path></g></svg>
<svg class="a" style="left:1238.00px;top:122.00px;" width="16" height="16" viewBox="0 0 16 16"><path d="M1 1.200h14l-5.400 6.500v6.300l-3.200-1.800v-4.500z" fill="none" stroke="#252423" stroke-width="1.400" stroke-linejoin="round"></path></svg>
<div class="t" style="left: 1262.5px; top: 121.7px; font-size: 15.6px; color: rgb(37, 36, 35); -webkit-text-stroke: 0.5px rgb(37, 36, 35); transform: scaleX(0.9964); transform-origin: 0px 0px;">Filters</div>
<svg class="a" style="left:1373.00px;top:123.00px;" width="14" height="11" viewBox="0 0 14 11"><g fill="none" stroke="#3b3a39" stroke-width="1.100"><path d="M1 6.500c1.500-3 3.800-4.500 6-4.500s4.500 1.500 6 4.500"></path><circle cx="7" cy="6.500" r="2"></circle></g></svg>
<svg class="a" style="left:1404.00px;top:122.00px;" width="13" height="14" viewBox="0 0 13 14"><path d="M1 1l5.500 6-5.500 6M6.500 1l5.500 6-5.500 6" fill="none" stroke="#3b3a39" stroke-width="1.200"></path></svg>
<div class="fbox" style="left:1234px;top:155.300px;width:179.600px;height:31px"></div>
<svg class="a" style="left:1244.50px;top:162.80px;" width="16" height="16" viewBox="0 0 16 16"><g fill="none" stroke="#3b3a39" stroke-width="1.100"><circle cx="9.800" cy="6" r="4.600"></circle><path d="M6.500 9.300L1 14.800"></path></g></svg>
<div class="t" style="left: 1274.6px; top: 165.15px; font-size: 12.5px; color: rgb(37, 36, 35); transform: scaleX(0.9644); transform-origin: 0px 0px;">Search</div>
<div class="a" style="left:1227.00px;top:189.80px;width:198.50px;height:1.00px;background:#e1dfdd;"></div>
<div class="t" style="left: 1234px; top: 209.6px; font-size: 12px; color: rgb(37, 36, 35); transform: scaleX(0.9803); transform-origin: 0px 0px;">Filters on this visual</div>
<div class="a" style="left:1403.50px;top:217.10px;width:1.70px;height:1.70px;background:#3b3a39;"></div>
<div class="a" style="left:1407.80px;top:217.10px;width:1.70px;height:1.70px;background:#3b3a39;"></div>
<div class="a" style="left:1412.10px;top:217.10px;width:1.70px;height:1.70px;background:#3b3a39;"></div>
<div class="fbox" style="left:1234px;top:232.3px;width:183.700px;height:45.200px"></div>
<div class="t" style="left: 1273px; top: 250.35px; font-size: 12.3px; color: rgb(37, 36, 35); transform: scaleX(0.969); transform-origin: 0px 0px;">Add data fields here</div>
<div class="t" style="left: 1234px; top: 306.7px; font-size: 12px; color: rgb(37, 36, 35); transform: scaleX(0.9863); transform-origin: 0px 0px;">Filters on this page</div>
<div class="a" style="left:1403.50px;top:314.20px;width:1.70px;height:1.70px;background:#3b3a39;"></div>
<div class="a" style="left:1407.80px;top:314.20px;width:1.70px;height:1.70px;background:#3b3a39;"></div>
<div class="a" style="left:1412.10px;top:314.20px;width:1.70px;height:1.70px;background:#3b3a39;"></div>
<div class="fbox" style="left:1234px;top:329.5px;width:183.700px;height:45.200px"></div>
<div class="t" style="left: 1273px; top: 347.55px; font-size: 12.3px; color: rgb(37, 36, 35); transform: scaleX(0.969); transform-origin: 0px 0px;">Add data fields here</div>
<div class="t" style="left: 1234px; top: 403.9px; font-size: 12px; color: rgb(37, 36, 35); transform: scaleX(0.975); transform-origin: 0px 0px;">Filters on all pages</div>
<div class="a" style="left:1403.50px;top:411.40px;width:1.70px;height:1.70px;background:#3b3a39;"></div>
<div class="a" style="left:1407.80px;top:411.40px;width:1.70px;height:1.70px;background:#3b3a39;"></div>
<div class="a" style="left:1412.10px;top:411.40px;width:1.70px;height:1.70px;background:#3b3a39;"></div>
<div class="fbox" style="left:1234px;top:426.6px;width:183.700px;height:45.200px"></div>
<div class="t" style="left: 1273px; top: 444.65px; font-size: 12.3px; color: rgb(37, 36, 35); transform: scaleX(0.969); transform-origin: 0px 0px;">Add data fields here</div>
<div class="t" style="left: 1435.7px; top: 121.7px; font-size: 15.6px; color: rgb(37, 36, 35); -webkit-text-stroke: 0.12px rgb(37, 36, 35); transform: scaleX(1.0309); transform-origin: 0px 0px;">Visualizations</div>
<svg class="a" style="left:1586.50px;top:122.00px;" width="13" height="14" viewBox="0 0 13 14"><path d="M1 1l5.500 6-5.500 6M6.500 1l5.500 6-5.500 6" fill="none" stroke="#3b3a39" stroke-width="1.200"></path></svg>
<div class="t" style="left: 1435.4px; top: 150px; font-size: 12px; color: rgb(37, 36, 35); -webkit-text-stroke: 0.35px rgb(37, 36, 35); transform: scaleX(1.0049); transform-origin: 0px 0px;">Build visual</div>
<div class="a" style="left:1435.40px;top:168.00px;width:31.50px;height:25.00px;background:#c8c6c4;border-radius:2px"></div>
<svg class="a" style="left:1437.00px;top:170.30px;" width="28" height="23" viewBox="0 0 28 23"><path d="M3 2.500h22" stroke="#252423" stroke-width="1.300"></path><rect x="3.500" y="5.5" width="21" height="6.500" fill="#117865" stroke="#0b4f43" stroke-width=".9" stroke-dasharray="1.600 1.200"></rect><rect x="3.500" y="14.5" width="21" height="6.500" fill="#117865" stroke="#0b4f43" stroke-width=".9" stroke-dasharray="1.600 1.200"></rect></svg>
<svg class="a" style="left:1506.00px;top:171.00px;" width="22" height="25" viewBox="0 0 22 25"><g fill="none" stroke="#252423" stroke-width="1.300"><path d="M5 14.500v-7h3.500v-5.500h4v7h3"></path><path d="M1.500 18v-7.500h3.500"></path><path d="M19.500 7.500c-1 4-3.500 7.500-7 10.500l-2-1.500c2.500-3.500 5.500-6.500 9-9z"></path><path d="M10.500 16.500c-2-.5-3.500 1-3.500 3-.8.800-1.800 1-2.500 1 2 1.800 6 1.800 7.500-1.500"></path></g></svg>
<svg class="a" style="left:1570.00px;top:169.00px;" width="27" height="27" viewBox="0 0 27 27"><g fill="none" stroke="#252423" stroke-width="1.300"><circle cx="10.500" cy="10.500" r="9"></circle><path d="M16.500 17l8 7.500" stroke-width="2.400"></path><path d="M2.500 11l4-3 4 3 6.500-5.500"></path><path d="M5.500 13v5M8.500 14.500v5M11.500 14v5.500M14.500 12v6" stroke-width="1.100"></path></g></svg>
<div class="a" style="left:1488.00px;top:211.00px;width:119.00px;height:1.00px;background:#d2d0ce;"></div>
<svg class="a" style="left:1438.00px;top:222.80px;" width="18" height="18" viewBox="0 0 18 18"><g fill="none" stroke="#323130" stroke-width="1.100"><path d="M1 0.500v17h16.500"></path><rect x="1" y="2.500" width="10" height="3.500" fill="#6db5ef"></rect><rect x="1" y="7.500" width="14" height="3.500" fill="#6db5ef"></rect><rect x="1" y="12.500" width="7" height="3.500" fill="#6db5ef"></rect></g></svg>
<svg class="a" style="left:1466.20px;top:222.80px;" width="18" height="18" viewBox="0 0 18 18"><g fill="none" stroke="#323130" stroke-width="1.100"><path d="M0.500 17.500h17"></path><rect x="2" y="8" width="3" height="9.500" fill="#6db5ef"></rect><rect x="6.500" y="3" width="3" height="14.500" fill="#6db5ef"></rect><rect x="11" y="9" width="3" height="8.500"></rect><rect x="14" y="2" width="3" height="15.500"></rect></g></svg>
<svg class="a" style="left:1494.20px;top:222.80px;" width="18" height="18" viewBox="0 0 18 18"><g fill="none" stroke="#323130" stroke-width="1.100"><path d="M1 17.500h16.500" stroke-width="1.300"></path><rect x="1.500" y="1" width="15.500" height="3.800" fill="#6db5ef" stroke="#2b88d8"></rect><rect x="2" y="6.800" width="8" height="3.500" fill="#c8c6c4" stroke="#8a8886"></rect><rect x="2" y="12.200" width="11" height="3.500" fill="#fff" stroke="#8a8886"></rect><path d="M1.500 0.500v17"></path></g></svg>
<svg class="a" style="left:1522.00px;top:222.80px;" width="18" height="18" viewBox="0 0 18 18"><g fill="none" stroke="#323130" stroke-width="1.100"><path d="M0.500 17.500h17.500" stroke-width="1.300"></path><rect x="1.500" y="1" width="4.300" height="16.500" fill="#6db5ef" stroke="#2b88d8"></rect><rect x="8" y="5.500" width="3" height="12"></rect><rect x="11" y="9.500" width="3" height="8" fill="#c8c6c4"></rect><rect x="14" y="5" width="3" height="12.500"></rect></g></svg>
<svg class="a" style="left:1550.00px;top:222.80px;" width="18" height="18" viewBox="0 0 18 18"><g fill="none" stroke="#323130" stroke-width="1.100"><path d="M1.500 0.500v17h16"></path><rect x="1.500" y="2.500" width="14.500" height="4.300"></rect><rect x="5" y="2.500" width="11" height="4.300" fill="#6db5ef" stroke="#2b88d8"></rect><rect x="1.500" y="10.500" width="14.500" height="4.300"></rect><rect x="10.500" y="10.500" width="5.500" height="4.300" fill="#c8c6c4" stroke="#8a8886"></rect></g></svg>
<svg class="a" style="left:1578.00px;top:222.80px;" width="18" height="18" viewBox="0 0 18 18"><g fill="none" stroke="#323130" stroke-width="1.100"><path d="M0.500 17.500h17.500" stroke-width="1.300"></path><rect x="3" y="2" width="4.500" height="15.500"></rect><rect x="3" y="2" width="4.500" height="11" fill="#6db5ef" stroke="#2b88d8"></rect><rect x="11.500" y="2" width="4.500" height="15.500"></rect><rect x="11.500" y="2" width="4.500" height="5" fill="#c8c6c4" stroke="#8a8886"></rect></g></svg>
<div class="a" style="left:1435px;top:248px;width:24px;height:24px;border:1.200px solid #323130;background:#f6f5f4"></div>
<svg class="a" style="left:1438.00px;top:250.90px;" width="18" height="18" viewBox="0 0 18 18"><g fill="none" stroke="#323130" stroke-width="1.100"><path d="M0.800 0.500v16h16.500"></path><path d="M1.500 11.500l5-6 3.500 3.500 3.500-4.500 3 3" stroke="#323130"></path><path d="M1.500 14.500l5.500-6 3.500 2 5.500-6.500" stroke="#4a7a6e"></path></g></svg>
<svg class="a" style="left:1466.20px;top:250.90px;" width="18" height="18" viewBox="0 0 18 18"><g fill="none" stroke="#323130" stroke-width="1.100"><path d="M0.800 16.500v-6l5.700-8 5.500 9.500 3-8.500 2.500 8v5z" fill="#fff" stroke="#323130"></path><path d="M12 10.500l3-8 2.500 8v6h-5z" fill="#c8c6c4" stroke="#8a8886"></path><path d="M0.800 16.800v-4.500l2.500 1.500 4.700-5.300 3.500 4 3-3.500 3 3v4.800z" fill="#6db5ef" stroke="#2b88d8"></path></g></svg>
<svg class="a" style="left:1494.20px;top:250.90px;" width="18" height="18" viewBox="0 0 18 18"><g fill="none" stroke="#323130" stroke-width="1.100"><path d="M0.800 1v16.500h17"></path><path d="M1 4l5.500 6.500 6-7.500 5 4.500v5.500l-5-3.500-6 6.500-5.500-5.500z" fill="#6db5ef" stroke="#2b88d8"></path><path d="M1 4l5.500 6.500 6-7.500 5 4.500M1 10.500l5.500 5.500 6-6.500 5 3.500" stroke="#2b88d8"></path></g></svg>
<svg class="a" style="left:1522.00px;top:250.90px;" width="18" height="18" viewBox="0 0 18 18"><g fill="none" stroke="#323130" stroke-width="1.100"><path d="M0.800 1v16.500h17"></path><path d="M1 2.500h16.500v8l-4.500-3.500-6 6-6-5.500z" fill="#6db5ef" stroke="#2b88d8"></path><path d="M1 7.500l6 5.500 6-6 4.500 3.500" stroke="#2b88d8" stroke-width="1.300"></path></g></svg>
<svg class="a" style="left:1550.00px;top:250.90px;" width="18" height="18" viewBox="0 0 18 18"><g fill="none" stroke="#323130" stroke-width="1.100"><path d="M0.500 17.500h17.500" stroke-width="1.300"></path><rect x="4" y="3" width="4" height="14.500" fill="#6db5ef" stroke="#2b88d8"></rect><rect x="4" y="12" width="4" height="5.500" fill="#fff"></rect><rect x="12" y="3" width="3.500" height="14.500"></rect><rect x="12" y="3" width="3.500" height="4.500" fill="#c8c6c4" stroke="#8a8886"></rect><path d="M1 15.500l4.500-5 4 4.500 7.500-9" stroke-width="1.200"></path><path d="M1.500 1v16"></path></g></svg>
<svg class="a" style="left:1578.00px;top:250.90px;" width="18" height="18" viewBox="0 0 18 18"><g fill="none" stroke="#323130" stroke-width="1.100"><path d="M0.500 17.500h17.500" stroke-width="1.300"></path><rect x="3.500" y="9" width="3.500" height="8.500" fill="#6db5ef" stroke="#2b88d8"></rect><rect x="7" y="2.500" width="3.500" height="15"></rect><rect x="11.500" y="6" width="3.500" height="11.500" fill="#c8c6c4" stroke="#8a8886"></rect><path d="M1 15.500l4.500-5 4 4.500 7.500-9" stroke-width="1.200"></path><path d="M1.500 1v16"></path></g></svg>
<svg class="a" style="left:1438.00px;top:279.00px;" width="18" height="18" viewBox="0 0 18 18"><g fill="none" stroke="#323130" stroke-width="1.100"><path d="M0.800 0.500v17h17"></path><path d="M1.500 3.500c4 0 4.500 7 8 7s4-7 8-7v4c-4 0-4.500 7-8 7s-4-7-8-7z" fill="#f2a14a" stroke="#d9822b"></path><path d="M1.500 8.500c4 0 4.500 5.500 8 5.500s4-5.500 8-5.500v3.500c-4 0-4.500 4.500-8 4.500s-4-4.500-8-4.500z" fill="#6db5ef" stroke="#2b88d8"></path></g></svg>
<svg class="a" style="left:1466.20px;top:279.00px;" width="18" height="18" viewBox="0 0 18 18"><g fill="none" stroke="#323130" stroke-width="1.100"><path d="M0.800 17.500h17"></path><rect x="1.500" y="3" width="3.500" height="14.500"></rect><rect x="5" y="3" width="3.500" height="14.500"></rect><rect x="8.500" y="3" width="3" height="5" fill="#2b88d8" stroke="#1e5f9e"></rect><rect x="11.500" y="1" width="3" height="7"></rect><rect x="14.500" y="1" width="2.500" height="16.500"></rect></g></svg>
<svg class="a" style="left:1494.20px;top:279.00px;" width="18" height="18" viewBox="0 0 18 18"><g fill="#6db5ef" stroke="#2b88d8" stroke-width="1.100"><rect x="0.800" y="1" width="16.500" height="4"></rect><rect x="3" y="5.500" width="12" height="4"></rect><rect x="5" y="10" width="8" height="3.500"></rect><rect x="6.500" y="13.500" width="5" height="3.500"></rect></g></svg>
<svg class="a" style="left:1522.00px;top:279.00px;" width="18" height="18" viewBox="0 0 18 18"><g fill="none" stroke="#323130" stroke-width="1.100"><path d="M0.800 0.500v17h17"></path></g><rect x="14" y="1.500" width="2.500" height="2.500" fill="#323130"></rect><rect x="4" y="4.500" width="2.500" height="2.500" fill="#c8c6c4"></rect><rect x="8.500" y="7.500" width="2.500" height="2.500" fill="#c8c6c4"></rect><rect x="4" y="12" width="2.500" height="2.500" fill="#323130"></rect><rect x="13.500" y="11.500" width="2.500" height="2.500" fill="#c8c6c4"></rect><rect x="10.500" y="3" width="2" height="2" fill="#e1dfdd"></rect></svg>
<svg class="a" style="left:1550.00px;top:279.00px;" width="18" height="18" viewBox="0 0 18 18"><g fill="none" stroke="#323130" stroke-width="1.100"><circle cx="9" cy="9" r="8.300" fill="#fff"></circle><path d="M9 0.700a8.300 8.300 0 0 1 5.500 14.500L9 9z" fill="#6db5ef" stroke="#2b88d8"></path><circle cx="9" cy="9" r="8.300"></circle></g></svg>
<svg class="a" style="left:1578.00px;top:279.00px;" width="18" height="18" viewBox="0 0 18 18"><g><circle cx="9" cy="9" r="6.300" fill="none" stroke="#6db5ef" stroke-width="4.200"></circle><path d="M9 0.700a8.300 8.300 0 0 0-7.800 5.500l4 1.500a4 4 0 0 1 3.800-2.800z" fill="#eaeaea" stroke="#2b88d8" stroke-width=".9"></path><circle cx="9" cy="9" r="8.400" fill="none" stroke="#2b88d8" stroke-width="1"></circle><circle cx="9" cy="9" r="4.200" fill="none" stroke="#2b88d8" stroke-width="1"></circle><path d="M1 8.500h4M11.500 12.500l2.500 3.500" stroke="#2b88d8" stroke-width="1"></path></g></svg>
<svg class="a" style="left:1438.00px;top:307.00px;" width="18" height="18" viewBox="0 0 18 18"><g stroke="#2b88d8" stroke-width="1.100"><rect x="0.800" y="0.800" width="8" height="8.500" fill="#6db5ef"></rect><rect x="0.800" y="9.300" width="8" height="8" fill="#6db5ef"></rect><rect x="8.800" y="0.800" width="8.500" height="5" fill="#fff" stroke="#323130"></rect><rect x="8.800" y="5.800" width="4" height="11.500" fill="#6db5ef"></rect><rect x="12.800" y="5.800" width="4.500" height="6" fill="#fff" stroke="#323130"></rect><rect x="12.800" y="11.800" width="4.500" height="5.500" fill="#fff" stroke="#323130"></rect></g></svg>
<svg class="a" style="left:1466.20px;top:307.00px;" width="18" height="18" viewBox="0 0 18 18"><g fill="none" stroke="#323130" stroke-width="1.100"><circle cx="8.500" cy="8" r="5.800"></circle><path d="M12.500 1.500a8 8 0 0 1-2.500 13.800M9 15.500v2M5 17.500h8"></path><path d="M6 5.500c1.500-1 3-.5 3.500.5s-1.500 2-1 3 2 .5 2.500 2" stroke="#3d7a5c" stroke-width="1.600"></path></g></svg>
<svg class="a" style="left:1494.20px;top:307.00px;" width="18" height="18" viewBox="0 0 18 18"><g stroke="#323130" stroke-width="1"><path d="M1 2.500l3.500-.5 2-1.500 2 2.500h3.500l-.5 5.500-4 1.500-1 3-3.500-2.500-1-4z" fill="#6db5ef"></path><path d="M12 3l5-1.500v8l-3.500 3.500-3-1.500 1-2.500z" fill="#c8c6c4"></path><path d="M2.500 11.500l3.500 1.500 1.500-2.500 4 .5-1 4-3 2.500-3.500-2z" fill="#c8c6c4"></path><path d="M10.500 11.500l3.500.5 1.500 2-2 3-3.500-.5-.5-2.500z" fill="#6db5ef"></path></g></svg>
<svg class="a" style="left:1522.00px;top:307.00px;" width="18" height="18" viewBox="0 0 18 18"><path d="M9.500 0.500L1.500 16l8-5z" fill="#3aa0d8"></path><path d="M9.500 0.500l6.500 17-6.500-6.500z" fill="#1b6fb5"></path><path d="M9.500 0.500l-3 9 3 1.500z" fill="#5cc0ea"></path></svg>
<svg class="a" style="left:1550.00px;top:307.00px;" width="18" height="18" viewBox="0 0 18 18"><g fill="none" stroke="#323130" stroke-width="1.100"><path d="M1 13.500a8 8 0 0 1 16 0h-3.500a4.500 4.500 0 0 0-9 0z" fill="#6db5ef" stroke="#323130" stroke-width="1.200"></path><path d="M9 13l3.500-4.500" stroke-width="1.800"></path><circle cx="9" cy="13.200" r="1.300" fill="#323130"></circle></g></svg>
<svg class="a" style="left:1578.00px;top:307.00px;" width="18" height="18" viewBox="0 0 18 18"><g fill="none" stroke="#323130" stroke-width="1.100"><rect x="0.800" y="2.500" width="16.500" height="13"></rect></g><text x="9" y="12.500" font-family="Liberation Sans,sans-serif" font-size="8.500" fill="#5b8fa8" text-anchor="middle" textLength="12.500" lengthAdjust="spacingAndGlyphs">123</text><path d="M3 13.800h12" stroke="#8a8886" stroke-width=".8"></path></svg>
<svg class="a" style="left:1438.00px;top:335.00px;" width="18" height="18" viewBox="0 0 18 18"><g fill="none" stroke="#323130" stroke-width="1.100"><rect x="0.800" y="0.800" width="16.500" height="16.500"></rect><path d="M3.500 2.500v13" stroke="#8a8886" stroke-width=".8"></path><path d="M5.500 4.500h9M5.500 10.500h9" stroke="#0f5e66" stroke-width="1.800"></path><path d="M5.500 7.300h6M5.500 13.300h4.500" stroke="#3b8a94" stroke-width="1.100"></path></g></svg>
<svg class="a" style="left:1466.20px;top:335.00px;" width="18" height="18" viewBox="0 0 18 18"><g fill="none" stroke="#323130" stroke-width="1.100"><rect x="0.800" y="2" width="16.500" height="13.500"></rect><path d="M5.500 4.500l2.500 4.500h-5z" fill="#7fd1a6" stroke="#2e9e6a"></path><path d="M12.500 9.500l2.500-4.500h-5z" fill="#f48aa0" stroke="#d83b5e"></path><path d="M3 12.500h12" stroke="#8a8886"></path></g></svg>
<svg class="a" style="left:1494.20px;top:335.00px;" width="18" height="18" viewBox="0 0 18 18"><g fill="none" stroke="#323130" stroke-width="1.100"><path d="M1 17v-15.500h16v6M1 17h9"></path><path d="M1 1.800h16" stroke="#c8c6c4" stroke-width="1.800"></path><rect x="4" y="6" width="3" height="3" fill="#c8c6c4" stroke="#8a8886"></rect><rect x="4" y="11.500" width="3" height="3" fill="#c8c6c4" stroke="#8a8886"></rect><path d="M9.500 9.500h8.500l-3 4v4.500h-2.500v-4.500z" fill="#fff" stroke-width="1.200"></path></g></svg>
<svg class="a" style="left:1522.00px;top:335.00px;" width="18" height="18" viewBox="0 0 18 18"><g fill="none" stroke="#323130" stroke-width="1.100"><path d="M1 1.800h16" stroke="#c8c6c4" stroke-width="2"></path><rect x="0.800" y="1" width="16.500" height="16.300"></rect><path d="M0.800 6.500h16.500M0.800 12h16.500M6.300 3v14.300M11.800 3v14.300"></path></g></svg>
<svg class="a" style="left:1550.00px;top:335.00px;" width="18" height="18" viewBox="0 0 18 18"><g fill="none" stroke="#323130" stroke-width="1.100"><rect x="0.800" y="12" width="16.500" height="5.300" fill="#6db5ef" stroke="none"></rect><rect x="11.800" y="3" width="5.500" height="14.300" fill="#6db5ef" stroke="none"></rect><path d="M1 1.800h16" stroke="#c8c6c4" stroke-width="2"></path><rect x="0.800" y="1" width="16.500" height="16.300"></rect><path d="M0.800 6.500h16.500M0.800 12h16.500M6.300 3v14.300M11.800 3v14.300" stroke="#fff" stroke-width="1"></path><rect x="0.800" y="1" width="16.500" height="16.300"></rect></g></svg>
<svg class="a" style="left:1578.00px;top:335.00px;" width="18" height="18" viewBox="0 0 18 18"><text x="9" y="15" font-family="Liberation Sans,sans-serif" font-size="16" font-weight="bold" fill="#2274b5" text-anchor="middle">R</text></svg>
<svg class="a" style="left:1438.00px;top:362.80px;" width="18" height="18" viewBox="0 0 18 18"><text x="9" y="13.500" font-family="Liberation Sans,sans-serif" font-size="15.500" font-weight="bold" fill="#2a80c4" text-anchor="middle" textLength="18.500" lengthAdjust="spacingAndGlyphs">Py</text></svg>
<svg class="a" style="left:1466.20px;top:362.80px;" width="18" height="18" viewBox="0 0 18 18"><g fill="none" stroke="#323130" stroke-width="1.100"><path d="M0.800 0.500v17h17"></path><path d="M1 3.500h12M1 8.500h8M1 13h4"></path><circle cx="14.500" cy="3.500" r="2.300" fill="#6db5ef" stroke="#2b88d8"></circle><rect x="9" y="7" width="3" height="3" fill="#c8c6c4" stroke="#8a8886"></rect><rect x="5" y="11.500" width="3" height="3" fill="#c8c6c4" stroke="#8a8886"></rect></g></svg>
<svg class="a" style="left:1494.20px;top:362.80px;" width="18" height="18" viewBox="0 0 18 18"><g fill="#6db5ef" stroke="#2b88d8" stroke-width="1.100"><rect x="0.800" y="7" width="5" height="4"></rect><rect x="11.500" y="0.800" width="5.800" height="3.800"></rect><rect x="11.500" y="7" width="5.800" height="3.800"></rect><rect x="11.500" y="13.300" width="5.800" height="3.800"></rect><path d="M5.800 9h5.700M8.800 2.800v12.400M8.800 2.800h2.700M8.800 15.200h2.700" fill="none"></path></g></svg>
<svg class="a" style="left:1522.00px;top:362.80px;" width="18" height="18" viewBox="0 0 18 18"><g fill="none" stroke="#323130" stroke-width="1.100"><path d="M1 1.500h16.500v11h-10l-4 4v-4h-2.500z" fill="#fdfdfd" stroke="#2a6f8f" stroke-width="1.200"></path></g></svg>
<svg class="a" style="left:1550.00px;top:362.80px;" width="18" height="18" viewBox="0 0 18 18"><g fill="none" stroke="#323130" stroke-width="1.100"><path d="M2.500 5v-4h8l5 5v11.500h-13v-7.500"></path><path d="M10.500 1v5h5"></path><circle cx="2.800" cy="7.500" r="1.800" fill="#6db5ef" stroke="#2b88d8"></circle><path d="M6 8h5M6 11.500h7" stroke="#3b8a94"></path></g></svg>
<svg class="a" style="left:1578.00px;top:362.80px;" width="18" height="18" viewBox="0 0 18 18"><g fill="none" stroke="#323130" stroke-width="1.100"><path d="M4 1.500h10v5.500a5 5 0 0 1-10 0z" stroke-width="1.200"></path><path d="M4 3h-3c0 3 1 5 3.500 5.500M14 3h3c0 3-1 5-3.500 5.500"></path><path d="M7.500 12c0 2-1 3-2 3.500h7c-1-.5-2-1.500-2-3.500"></path><path d="M4 1.500h10" stroke="#2b88d8" stroke-width="1.500"></path><rect x="4.500" y="15.500" width="9" height="2" fill="#6db5ef" stroke="#2b88d8"></rect></g></svg>
<svg class="a" style="left:1438.00px;top:391.00px;" width="18" height="18" viewBox="0 0 18 18"><g fill="none" stroke="#323130" stroke-width="1.100"><path d="M2 0.800h9l5 5v11.500h-14z" fill="#e1dfdd" stroke-width="1.300"></path><path d="M11 0.800v5h5"></path><rect x="4.500" y="11" width="2" height="5" fill="#323130" stroke="none"></rect><rect x="8" y="13" width="2" height="3" fill="#323130" stroke="none"></rect><rect x="11.500" y="9" width="2" height="7" fill="#323130" stroke="none"></rect></g></svg>
<svg class="a" style="left:1466.20px;top:391.00px;" width="18" height="18" viewBox="0 0 18 18"><g fill="none" stroke="#323130" stroke-width="1.100"><path d="M6 3h11.300v12.500h-16.500v-4"></path></g><text x="10.500" y="12.500" font-family="Liberation Sans,sans-serif" font-size="8" fill="#5b8fa8" text-anchor="middle" textLength="11" lengthAdjust="spacingAndGlyphs">123</text><path d="M3 14h12.500" stroke="#8a8886" stroke-width=".8"></path><path d="M5 0.300L0.800 7h3l-2.500 5.500 6.500-8h-3l2.500-4.200z" fill="#f5a623" stroke="#c7740a" stroke-width=".7"></path></svg>
<svg class="a" style="left:1494.20px;top:391.00px;" width="18" height="18" viewBox="0 0 18 18"><g fill="none" stroke="#323130" stroke-width="1.100"><path d="M1 12v5h9M7 1.500h10v6"></path><path d="M7 1.800h10" stroke="#c8c6c4" stroke-width="1.800"></path><rect x="4" y="11.500" width="3" height="3" fill="#c8c6c4" stroke="#8a8886"></rect><rect x="7.500" y="6" width="2.500" height="2.500" fill="#c8c6c4" stroke="#8a8886"></rect><path d="M9.500 9.500h8.500l-3 4v4.500h-2.500v-4.500z" fill="#fff" stroke-width="1.200"></path></g><path d="M5 0.300L0.800 7h3l-2.500 5.500 6.500-8h-3l2.500-4.200z" fill="#f5a623" stroke="#c7740a" stroke-width=".7"></path></svg>
<svg class="a" style="left:1522.00px;top:391.00px;" width="18" height="18" viewBox="0 0 18 18"><g stroke-width="1.100"><rect x="1.500" y="1.500" width="16" height="15.500" fill="#6db5ef" stroke="#1a6fa8"></rect><path d="M3 16l4-4 2-4.500 4-2 2.500-3" fill="none" stroke="#eaf3fb" stroke-width="2.600"></path><path d="M0.500 0.500h5v5l-2.500 3-2.500-3z" fill="#e07b1a" stroke="#b85f0c"></path><rect x="2" y="2.500" width="2" height="2" fill="#fff" stroke="none"></rect><circle cx="15" cy="15.500" r="2.600" fill="#e07b1a" stroke="#fff"></circle><rect x="15.500" y="9" width="2.500" height="2.500" fill="#e07b1a" stroke="#fff" stroke-width=".6"></rect></g></svg>
<svg class="a" style="left:1550.00px;top:391.00px;" width="18" height="18" viewBox="0 0 18 18"><g fill="none" stroke="#a349a4" stroke-width="1.100"><path d="M9 1l8 8-8 8-8-8z"></path><path d="M5 5l8 8M13 5l-8 8" stroke="#c27fcc"></path><path d="M9 1l-4 4 4 4 4-4z" fill="#fbf3fc"></path></g></svg>
<svg class="a" style="left:1578.00px;top:391.00px;" width="18" height="18" viewBox="0 0 18 18"><g fill="none" stroke="#2a8fcf" stroke-width="1.200"><path d="M1 2h10.500l6 7-6 7h-10.500l6-7z" fill="#e9f5fc"></path><path d="M3.500 16l9-10.500M7.500 16l7-8.500" stroke="#4aa8dd"></path></g></svg>
<div class="a" style="left:1440.30px;top:425.80px;width:2.20px;height:2.20px;background:#252423;"></div>
<div class="a" style="left:1446.30px;top:425.80px;width:2.20px;height:2.20px;background:#252423;"></div>
<div class="a" style="left:1452.30px;top:425.80px;width:2.20px;height:2.20px;background:#252423;"></div>
<div class="t" style="left: 1439.4px; top: 457.7px; font-size: 12px; color: rgb(37, 36, 35); transform: scaleX(0.9267); transform-origin: 0px 0px;">X-axis</div>
<div class="well" style="left:1431px;top:477.5px;width:170px;height:27px"></div>
<div class="t" style="left: 1442px; top: 485.85px; font-size: 12.3px; color: rgb(37, 36, 35); transform: scaleX(0.9717); transform-origin: 0px 0px;">Add data fields here</div>
<div class="t" style="left: 1439.4px; top: 517.7px; font-size: 12px; color: rgb(37, 36, 35); transform: scaleX(0.9457); transform-origin: 0px 0px;">Y-axis</div>
<div class="well" style="left:1431px;top:537.5px;width:170px;height:27px"></div>
<div class="t" style="left: 1442px; top: 545.85px; font-size: 12.3px; color: rgb(37, 36, 35); transform: scaleX(0.9717); transform-origin: 0px 0px;">Add data fields here</div>
<div class="t" style="left: 1439.4px; top: 577.7px; font-size: 12px; color: rgb(37, 36, 35); transform: scaleX(0.9539); transform-origin: 0px 0px;">Secondary y-axis</div>
<div class="well" style="left:1431px;top:597.5px;width:170px;height:27px"></div>
<div class="t" style="left: 1442px; top: 605.85px; font-size: 12.3px; color: rgb(37, 36, 35); transform: scaleX(0.9717); transform-origin: 0px 0px;">Add data fields here</div>
<div class="t" style="left: 1439.4px; top: 637.7px; font-size: 12px; color: rgb(37, 36, 35); transform: scaleX(0.9614); transform-origin: 0px 0px;">Legend</div>
<div class="well" style="left:1431px;top:657.5px;width:170px;height:27px"></div>
<div class="t" style="left: 1442px; top: 665.85px; font-size: 12.3px; color: rgb(37, 36, 35); transform: scaleX(0.9717); transform-origin: 0px 0px;">Add data fields here</div>
<div class="t" style="left: 1439.4px; top: 697.7px; font-size: 12px; color: rgb(37, 36, 35); transform: scaleX(0.995); transform-origin: 0px 0px;">Small multiples</div>
<div class="well" style="left:1431px;top:717.5px;width:170px;height:27px"></div>
<div class="t" style="left: 1442px; top: 725.85px; font-size: 12.3px; color: rgb(37, 36, 35); transform: scaleX(0.9717); transform-origin: 0px 0px;">Add data fields here</div>
<div class="t" style="left: 1439.4px; top: 757.7px; font-size: 12px; color: rgb(37, 36, 35); transform: scaleX(1.0077); transform-origin: 0px 0px;">Tooltips</div>
<div class="well" style="left:1431px;top:777.5px;width:170px;height:27px"></div>
<div class="t" style="left: 1442px; top: 785.85px; font-size: 12.3px; color: rgb(37, 36, 35); transform: scaleX(0.9717); transform-origin: 0px 0px;">Add data fields here</div>
<div class="t" style="left: 1439.6px; top: 817.85px; font-size: 12.3px; color: rgb(50, 49, 48); -webkit-text-stroke: 0.4px rgb(50, 49, 48); transform: scaleX(1.0408); transform-origin: 0px 0px;">Drill through</div>
<div class="t" style="left: 1439.6px; top: 843.05px; font-size: 12.3px; color: rgb(37, 36, 35); transform: scaleX(0.9599); transform-origin: 0px 0px;">Cross-report</div>
<div class="a" style="left:1553px;top:841.300px;width:32px;height:15.500px;border:1px solid #605e5c;border-radius:8px;background:#fff"></div>
<div class="a" style="left:1557.80px;top:845.40px;width:7.2px;height:7.2px;border-radius:50%;background:#605e5c"></div>
<div class="t" style="left: 1568.2px; top: 844.55px; font-size: 9.5px; color: rgb(96, 94, 92); transform: scaleX(0.96); transform-origin: 0px 0px;">Off</div>
<div class="t" style="left: 1439.6px; top: 869.85px; font-size: 12.3px; color: rgb(37, 36, 35); transform: scaleX(0.9478); transform-origin: 0px 0px;">Keep all filters</div>
<div class="a" style="left:1553px;top:868.600px;width:32px;height:15.500px;border-radius:8px;background:#117865"></div>
<div class="t" style="left: 1557.8px; top: 871.65px; font-size: 9.5px; color: rgb(255, 255, 255); font-weight: bold; transform: scaleX(0.9089); transform-origin: 0px 0px;">On</div>
<div class="a" style="left:1572.30px;top:872.60px;width:7.6px;height:7.6px;border-radius:50%;background:#fff"></div>
<div class="well" style="left:1431.700px;top:894.300px;width:169.200px;height:25px"></div>
<div class="t" style="left: 1440.4px; top: 901.65px; font-size: 12.3px; color: rgb(37, 36, 35); transform: scaleX(0.9961); transform-origin: 0px 0px;">Add drill-through fields here</div>
<div class="t" style="left: 1616.8px; top: 121.7px; font-size: 15.6px; color: rgb(37, 36, 35); -webkit-text-stroke: 0.5px rgb(37, 36, 35); transform: scaleX(0.9954); transform-origin: 0px 0px;">Data</div>
<svg class="a" style="left:1900.00px;top:122.00px;" width="13" height="14" viewBox="0 0 13 14"><path d="M1 1l5.500 6-5.500 6M6.500 1l5.500 6-5.500 6" fill="none" stroke="#3b3a39" stroke-width="1.200"></path></svg>
<div class="a" style="left:1612.700px;top:156px;width:302.300px;height:22px;background:#fff;border:1px solid #d2d0ce;border-bottom-color:#8a8886;border-radius:3px"></div>
<svg class="a" style="left:1624.50px;top:160.00px;" width="15" height="15" viewBox="0 0 15 15"><g fill="none" stroke="#605e5c" stroke-width="1.100"><circle cx="6" cy="6" r="4.800"></circle><path d="M9.500 9.500l4.500 4.500"></path></g></svg>
<div class="t" style="left: 1646.2px; top: 161px; font-size: 13px; color: rgb(96, 94, 92); transform: scaleX(0.9902); transform-origin: 0px 0px;">Search</div>
<div class="cb" style="left:1652px;top:188.5px"></div>
<div class="t" style="left: 1690.5px; top: 188.65px; font-size: 12.3px; color: rgb(64, 62, 60); transform: scaleX(0.9342); transform-origin: 0px 0px;">Stop Time (HH:MM:SS)</div>
<div class="cb" style="left:1652px;top:212.5px"></div>
<svg class="a" style="left:1671.50px;top:211.00px;" width="15" height="15" viewBox="0 0 15 15"><g fill="none" stroke="#252423" stroke-width="1.150"><path d="M7 13.500h-3.500a2 2 0 0 1-2-2v-8a2 2 0 0 1 2-2h6.500a2 2 0 0 1 2 2v3"></path><path d="M1.500 5.500h11M1.500 9.500h5M5.500 1.500v12"></path><path d="M13.800 8.500h-5.300l3 3-3 3h5.300" stroke-width="1.200"></path></g></svg>
<div class="t" style="left: 1690.5px; top: 212.65px; font-size: 12.3px; color: rgb(64, 62, 60); transform: scaleX(0.9684); transform-origin: 0px 0px;">Stop Time in Minutes</div>
<div class="cb" style="left:1652px;top:236.5px"></div>
<svg class="a" style="left:1672.50px;top:235.50px;" width="12" height="14" viewBox="0 0 12 14"><path d="M10.500 3v-1.800h-9l5 5.800-5 5.800h9v-1.800" fill="none" stroke="#252423" stroke-width="1.150"></path></svg>
<div class="t" style="left: 1690.5px; top: 236.65px; font-size: 12.3px; color: rgb(64, 62, 60); transform: scaleX(0.9697); transform-origin: 0px 0px;">Theft Amount(L)</div>
<div class="cb" style="left:1652px;top:260.5px"></div>
<svg class="a" style="left:1672.50px;top:259.50px;" width="12" height="14" viewBox="0 0 12 14"><path d="M10.500 3v-1.800h-9l5 5.800-5 5.800h9v-1.800" fill="none" stroke="#252423" stroke-width="1.150"></path></svg>
<div class="t" style="left: 1690.5px; top: 260.65px; font-size: 12.3px; color: rgb(64, 62, 60); transform: scaleX(0.9226); transform-origin: 0px 0px;">Theft Events</div>
<div class="cb" style="left:1652px;top:284.5px"></div>
<div class="t" style="left: 1690.5px; top: 284.65px; font-size: 12.3px; color: rgb(64, 62, 60); transform: scaleX(0.9307); transform-origin: 0px 0px;">Vehicle Type</div>
<div class="cb" style="left:1652px;top:308.5px"></div>
<div class="t" style="left: 1690.5px; top: 308.65px; font-size: 12.3px; color: rgb(64, 62, 60); transform: scaleX(0.9395); transform-origin: 0px 0px;">VehicleId</div>
<div class="cb" style="left:1652px;top:332.5px"></div>
<div class="t" style="left: 1690.5px; top: 332.65px; font-size: 12.3px; color: rgb(64, 62, 60); transform: scaleX(0.9457); transform-origin: 0px 0px;">Working Time (HH:MM:SS)</div>
<div class="cb" style="left:1652px;top:356.5px"></div>
<svg class="a" style="left:1671.50px;top:355.00px;" width="15" height="15" viewBox="0 0 15 15"><g fill="none" stroke="#252423" stroke-width="1.150"><path d="M7 13.500h-3.500a2 2 0 0 1-2-2v-8a2 2 0 0 1 2-2h6.500a2 2 0 0 1 2 2v3"></path><path d="M1.500 5.500h11M1.500 9.500h5M5.500 1.500v12"></path><path d="M13.800 8.500h-5.300l3 3-3 3h5.300" stroke-width="1.200"></path></g></svg>
<div class="t" style="left: 1690.5px; top: 356.65px; font-size: 12.3px; color: rgb(64, 62, 60); transform: scaleX(0.9878); transform-origin: 0px 0px;">Working Time in Minute</div>
<svg class="a" style="left:1620.50px;top:383.50px;" width="12" height="7" viewBox="0 0 12 7"><path d="M1 1l5 5 5-5" fill="none" stroke="#605e5c" stroke-width="1.100"></path></svg>
<svg class="a" style="left:1636.50px;top:380.00px;" width="13" height="13" viewBox="0 0 13 13"><g fill="none" stroke="#252423" stroke-width="1.200"><rect x="0.800" y="0.800" width="11.400" height="11.400" rx="2.200"></rect><path d="M0.800 4.600h11.400M0.800 8.400h11.400M4.600 0.800v11.400M8.400 0.800v11.400"></path></g></svg>
<div class="t" style="left: 1655.3px; top: 380.65px; font-size: 12.3px; color: rgb(64, 62, 60); transform: scaleX(0.9502); transform-origin: 0px 0px;">Daily Distance Report</div>
<div class="cb" style="left:1652px;top:404.5px"></div>
<div class="t" style="left: 1690.5px; top: 404.65px; font-size: 12.3px; color: rgb(64, 62, 60); transform: scaleX(0.9236); transform-origin: 0px 0px;">Date</div>
<div class="cb" style="left:1652px;top:428.5px"></div>
<svg class="a" style="left:1672.50px;top:427.50px;" width="12" height="14" viewBox="0 0 12 14"><path d="M10.500 3v-1.800h-9l5 5.800-5 5.800h9v-1.800" fill="none" stroke="#252423" stroke-width="1.150"></path></svg>
<div class="t" style="left: 1690.5px; top: 428.65px; font-size: 12.3px; color: rgb(64, 62, 60); transform: scaleX(0.9326); transform-origin: 0px 0px;">Distance Travelled(kms)</div>
<div class="cb" style="left:1652px;top:452.5px"></div>
<div class="t" style="left: 1690.5px; top: 452.65px; font-size: 12.3px; color: rgb(64, 62, 60); transform: scaleX(0.941); transform-origin: 0px 0px;">Vehicle Name</div>
<div class="cb" style="left:1652px;top:476.5px"></div>
<div class="t" style="left: 1690.5px; top: 476.65px; font-size: 12.3px; color: rgb(64, 62, 60); transform: scaleX(0.9307); transform-origin: 0px 0px;">Vehicle Type</div>
<svg class="a" style="left:1623.50px;top:500.50px;" width="7" height="12" viewBox="0 0 7 12"><path d="M1 1l5 5-5 5" fill="none" stroke="#605e5c" stroke-width="1.100"></path></svg>
<svg class="a" style="left:1636.50px;top:500.00px;" width="13" height="13" viewBox="0 0 13 13"><g fill="none" stroke="#252423" stroke-width="1.200"><rect x="0.800" y="0.800" width="11.400" height="11.400" rx="2.200"></rect><path d="M0.800 4.600h11.400M0.800 8.400h11.400M4.600 0.800v11.400M8.400 0.800v11.400"></path></g></svg>
<div class="t" style="left: 1655.3px; top: 500.65px; font-size: 12.3px; color: rgb(64, 62, 60); transform: scaleX(0.9802); transform-origin: 0px 0px;">Hub to Hub Report</div>
<svg class="a" style="left:1623.50px;top:524.50px;" width="7" height="12" viewBox="0 0 7 12"><path d="M1 1l5 5-5 5" fill="none" stroke="#605e5c" stroke-width="1.100"></path></svg>
<svg class="a" style="left:1636.50px;top:524.00px;" width="13" height="13" viewBox="0 0 13 13"><g fill="none" stroke="#252423" stroke-width="1.200"><rect x="0.800" y="0.800" width="11.400" height="11.400" rx="2.200"></rect><path d="M0.800 4.600h11.400M0.800 8.400h11.400M4.600 0.800v11.400M8.400 0.800v11.400"></path></g></svg>
<div class="t" style="left: 1655.3px; top: 524.65px; font-size: 12.3px; color: rgb(64, 62, 60); transform: scaleX(0.9707); transform-origin: 0px 0px;">Mining Trips Report</div>
<svg class="a" style="left:1620.50px;top:551.50px;" width="12" height="7" viewBox="0 0 12 7"><path d="M1 1l5 5 5-5" fill="none" stroke="#605e5c" stroke-width="1.100"></path></svg>
<svg class="a" style="left:1636.50px;top:548.00px;" width="13" height="13" viewBox="0 0 13 13"><g fill="none" stroke="#252423" stroke-width="1.200"><rect x="0.800" y="0.800" width="11.400" height="11.400" rx="2.200"></rect><path d="M0.800 4.600h11.400M0.800 8.400h11.400M4.600 0.800v11.400M8.400 0.800v11.400"></path></g></svg>
<div class="t" style="left: 1655.3px; top: 548.65px; font-size: 12.3px; color: rgb(64, 62, 60); transform: scaleX(0.9305); transform-origin: 0px 0px;">Places Summary Report</div>
<div class="cb" style="left:1652px;top:572.5px"></div>
<div class="t" style="left: 1690.5px; top: 572.65px; font-size: 12.3px; color: rgb(64, 62, 60); transform: scaleX(0.945); transform-origin: 0px 0px;">Duration (HH:MM:SS)</div>
<div class="cb" style="left:1652px;top:596.5px"></div>
<svg class="a" style="left:1671.50px;top:595.00px;" width="15" height="15" viewBox="0 0 15 15"><g fill="none" stroke="#252423" stroke-width="1.150"><path d="M7 13.500h-3.500a2 2 0 0 1-2-2v-8a2 2 0 0 1 2-2h6.500a2 2 0 0 1 2 2v3"></path><path d="M1.500 5.500h11M1.500 9.500h5M5.500 1.500v12"></path><path d="M13.800 8.500h-5.300l3 3-3 3h5.300" stroke-width="1.200"></path></g></svg>
<div class="t" style="left: 1690.5px; top: 596.65px; font-size: 12.3px; color: rgb(64, 62, 60); transform: scaleX(0.997); transform-origin: 0px 0px;">Duration in Minute</div>
<div class="cb" style="left:1652px;top:620.5px"></div>
<svg class="a" style="left:1672.00px;top:619.50px;" width="14" height="14" viewBox="0 0 14 14"><g fill="none" stroke="#252423" stroke-width="1.100"><rect x="1" y="1.500" width="12" height="11.500" rx="2.200"></rect><path d="M1 5h12"></path></g><g fill="#252423"><rect x="3.500" y="7" width="1.500" height="1.500"></rect><rect x="6.300" y="7" width="1.500" height="1.500"></rect><rect x="9" y="7" width="1.500" height="1.500"></rect><rect x="3.500" y="9.800" width="1.500" height="1.500"></rect><rect x="6.300" y="9.800" width="1.500" height="1.500"></rect></g></svg>
<svg class="a" style="left:1638.00px;top:620.50px;" width="7" height="12" viewBox="0 0 7 12"><path d="M1 1l5 5-5 5" fill="none" stroke="#605e5c" stroke-width="1.100"></path></svg>
<div class="t" style="left: 1690.5px; top: 620.65px; font-size: 12.3px; color: rgb(64, 62, 60); transform: scaleX(0.9239); transform-origin: 0px 0px;">End Time</div>
<div class="cb" style="left:1652px;top:644.5px"></div>
<div class="t" style="left: 1690.5px; top: 644.65px; font-size: 12.3px; color: rgb(64, 62, 60); transform: scaleX(0.943); transform-origin: 0px 0px;">Idling Time (HH:MM:SS)</div>
<div class="cb" style="left:1652px;top:668.5px"></div>
<svg class="a" style="left:1671.50px;top:667.00px;" width="15" height="15" viewBox="0 0 15 15"><g fill="none" stroke="#252423" stroke-width="1.150"><path d="M7 13.500h-3.500a2 2 0 0 1-2-2v-8a2 2 0 0 1 2-2h6.500a2 2 0 0 1 2 2v3"></path><path d="M1.500 5.500h11M1.500 9.500h5M5.500 1.500v12"></path><path d="M13.800 8.500h-5.300l3 3-3 3h5.300" stroke-width="1.200"></path></g></svg>
<div class="t" style="left: 1690.5px; top: 668.65px; font-size: 12.3px; color: rgb(64, 62, 60); transform: scaleX(0.9895); transform-origin: 0px 0px;">Idling Time in Minute</div>
<div class="cb" style="left:1652px;top:692.5px"></div>
<div class="t" style="left: 1690.5px; top: 692.65px; font-size: 12.3px; color: rgb(64, 62, 60); transform: scaleX(0.9551); transform-origin: 0px 0px;">Ignition Time (HH:MM:SS)</div>
<div class="cb" style="left:1652px;top:716.5px"></div>
<svg class="a" style="left:1671.50px;top:715.00px;" width="15" height="15" viewBox="0 0 15 15"><g fill="none" stroke="#252423" stroke-width="1.150"><path d="M7 13.500h-3.500a2 2 0 0 1-2-2v-8a2 2 0 0 1 2-2h6.500a2 2 0 0 1 2 2v3"></path><path d="M1.500 5.500h11M1.500 9.500h5M5.500 1.500v12"></path><path d="M13.800 8.500h-5.300l3 3-3 3h5.300" stroke-width="1.200"></path></g></svg>
<div class="t" style="left: 1690.5px; top: 716.65px; font-size: 12.3px; color: rgb(64, 62, 60); transform: scaleX(0.9997); transform-origin: 0px 0px;">Ignition Time in Minute</div>
<div class="cb" style="left:1652px;top:740.5px"></div>
<div class="t" style="left: 1690.5px; top: 740.65px; font-size: 12.3px; color: rgb(64, 62, 60); transform: scaleX(0.9503); transform-origin: 0px 0px;">Moving Time (HH:MM:SS)</div>
<div class="cb" style="left:1652px;top:764.5px"></div>
<svg class="a" style="left:1671.50px;top:763.00px;" width="15" height="15" viewBox="0 0 15 15"><g fill="none" stroke="#252423" stroke-width="1.150"><path d="M7 13.500h-3.500a2 2 0 0 1-2-2v-8a2 2 0 0 1 2-2h6.500a2 2 0 0 1 2 2v3"></path><path d="M1.500 5.500h11M1.500 9.500h5M5.500 1.500v12"></path><path d="M13.800 8.500h-5.300l3 3-3 3h5.300" stroke-width="1.200"></path></g></svg>
<div class="t" style="left: 1690.5px; top: 764.65px; font-size: 12.3px; color: rgb(64, 62, 60); transform: scaleX(0.9941); transform-origin: 0px 0px;">Moving Time in Minute</div>
<div class="cb" style="left:1652px;top:788.5px"></div>
<div class="t" style="left: 1690.5px; top: 788.65px; font-size: 12.3px; color: rgb(64, 62, 60); transform: scaleX(0.9163); transform-origin: 0px 0px;">Park Time (HH:MM:SS)</div>
<div class="cb" style="left:1652px;top:812.5px"></div>
<svg class="a" style="left:1671.50px;top:811.00px;" width="15" height="15" viewBox="0 0 15 15"><g fill="none" stroke="#252423" stroke-width="1.150"><path d="M7 13.500h-3.500a2 2 0 0 1-2-2v-8a2 2 0 0 1 2-2h6.500a2 2 0 0 1 2 2v3"></path><path d="M1.500 5.500h11M1.500 9.500h5M5.500 1.500v12"></path><path d="M13.800 8.500h-5.300l3 3-3 3h5.300" stroke-width="1.200"></path></g></svg>
<div class="t" style="left: 1690.5px; top: 812.65px; font-size: 12.3px; color: rgb(64, 62, 60); transform: scaleX(0.9616); transform-origin: 0px 0px;">Park Time in Minute</div>
<div class="cb" style="left:1652px;top:836.5px"></div>
<div class="t" style="left: 1690.5px; top: 836.65px; font-size: 12.3px; color: rgb(64, 62, 60); transform: scaleX(0.8614); transform-origin: 0px 0px;">Place</div>
<div class="cb" style="left:1652px;top:860.5px"></div>
<svg class="a" style="left:1672.00px;top:859.50px;" width="14" height="14" viewBox="0 0 14 14"><g fill="none" stroke="#252423" stroke-width="1.100"><rect x="1" y="1.500" width="12" height="11.500" rx="2.200"></rect><path d="M1 5h12"></path></g><g fill="#252423"><rect x="3.500" y="7" width="1.500" height="1.500"></rect><rect x="6.300" y="7" width="1.500" height="1.500"></rect><rect x="9" y="7" width="1.500" height="1.500"></rect><rect x="3.500" y="9.800" width="1.500" height="1.500"></rect><rect x="6.300" y="9.800" width="1.500" height="1.500"></rect></g></svg>
<svg class="a" style="left:1638.00px;top:860.50px;" width="7" height="12" viewBox="0 0 7 12"><path d="M1 1l5 5-5 5" fill="none" stroke="#605e5c" stroke-width="1.100"></path></svg>
<div class="t" style="left: 1690.5px; top: 860.65px; font-size: 12.3px; color: rgb(64, 62, 60); transform: scaleX(0.9349); transform-origin: 0px 0px;">Start Time</div>
<div class="cb" style="left:1652px;top:884.5px"></div>
<div class="t" style="left: 1690.5px; top: 884.65px; font-size: 12.3px; color: rgb(64, 62, 60); transform: scaleX(0.9375); transform-origin: 0px 0px;">VehicleId</div>
<svg class="a" style="left:1623.50px;top:908.50px;" width="7" height="12" viewBox="0 0 7 12"><path d="M1 1l5 5-5 5" fill="none" stroke="#605e5c" stroke-width="1.100"></path></svg>
<svg class="a" style="left:1636.50px;top:908.00px;" width="13" height="13" viewBox="0 0 13 13"><g fill="none" stroke="#252423" stroke-width="1.200"><rect x="0.800" y="0.800" width="11.400" height="11.400" rx="2.200"></rect><path d="M0.800 4.600h11.400M0.800 8.400h11.400M4.600 0.800v11.400M8.400 0.800v11.400"></path></g></svg>
<div class="t" style="left: 1655.3px; top: 908.65px; font-size: 12.3px; color: rgb(64, 62, 60); transform: scaleX(0.9261); transform-origin: 0px 0px;">Thu Jul 18 2024 09_59_17 GMT+05</div>
<svg class="a" style="left:1623.50px;top:932.50px;" width="7" height="12" viewBox="0 0 7 12"><path d="M1 1l5 5-5 5" fill="none" stroke="#605e5c" stroke-width="1.100"></path></svg>
<svg class="a" style="left:1636.50px;top:932.00px;" width="13" height="13" viewBox="0 0 13 13"><g fill="none" stroke="#252423" stroke-width="1.200"><rect x="0.800" y="0.800" width="11.400" height="11.400" rx="2.200"></rect><path d="M0.800 4.600h11.400M0.800 8.400h11.400M4.600 0.800v11.400M8.400 0.800v11.400"></path></g></svg>
<div class="t" style="left: 1655.3px; top: 932.65px; font-size: 12.3px; color: rgb(64, 62, 60); transform: scaleX(0.9261); transform-origin: 0px 0px;">Thu Jul 18 2024 09_59_38 GMT+05</div>
<svg class="a" style="left:1623.50px;top:956.50px;" width="7" height="12" viewBox="0 0 7 12"><path d="M1 1l5 5-5 5" fill="none" stroke="#605e5c" stroke-width="1.100"></path></svg>
<svg class="a" style="left:1636.50px;top:956.00px;" width="13" height="13" viewBox="0 0 13 13"><g fill="none" stroke="#252423" stroke-width="1.200"><rect x="0.800" y="0.800" width="11.400" height="11.400" rx="2.200"></rect><path d="M0.800 4.600h11.400M0.800 8.400h11.400M4.600 0.800v11.400M8.400 0.800v11.400"></path></g></svg>
<div class="t" style="left: 1655.3px; top: 956.65px; font-size: 12.3px; color: rgb(64, 62, 60); transform: scaleX(0.9261); transform-origin: 0px 0px;">Thu Jul 18 2024 09_59_53 GMT+05</div>
<svg class="a" style="left:1623.50px;top:980.50px;" width="7" height="12" viewBox="0 0 7 12"><path d="M1 1l5 5-5 5" fill="none" stroke="#605e5c" stroke-width="1.100"></path></svg>
<svg class="a" style="left:1636.50px;top:980.00px;" width="13" height="13" viewBox="0 0 13 13"><g fill="none" stroke="#252423" stroke-width="1.200"><rect x="0.800" y="0.800" width="11.400" height="11.400" rx="2.200"></rect><path d="M0.800 4.600h11.400M0.800 8.400h11.400M4.600 0.800v11.400M8.400 0.800v11.400"></path></g></svg>
<div class="t" style="left: 1655.3px; top: 980.65px; font-size: 12.3px; color: rgb(64, 62, 60); transform: scaleX(0.9261); transform-origin: 0px 0px;">Thu Jul 18 2024 10_00_20 GMT+05</div>
<div class="a" style="left:1908.50px;top:438.50px;width:7.00px;height:559.00px;background:#c8c6c4;border-radius:1px"></div>
<svg class="a" style="left:53.00px;top:980.00px;" width="19" height="14" viewBox="0 0 19 14"><g fill="none" stroke="#252423" stroke-width="1.200"><rect x="0.800" y="0.800" width="17.400" height="9.500"></rect><path d="M9.500 10.300v2.700M5.500 13.200h8"></path></g></svg>
<div class="a" style="left:51.00px;top:1000.00px;width:24.00px;height:2.70px;background:#117865;border-radius:1.500px"></div>
<svg class="a" style="left:101.00px;top:977.00px;" width="13" height="20" viewBox="0 0 13 20"><g fill="none" stroke="#3b3a39" stroke-width="1.100"><rect x="0.800" y="0.800" width="11.400" height="18.400" rx="1.500"></rect><path d="M5.500 16.500h2"></path></g></svg>
<div class="a" style="left:134.300px;top:986px;width:0;height:0;border-top:4px solid transparent;border-bottom:4px solid transparent;border-right:5px solid #c8c6c4"></div>
<div class="a" style="left:156.700px;top:986px;width:0;height:0;border-top:4px solid transparent;border-bottom:4px solid transparent;border-left:5px solid #c8c6c4"></div>
<div class="a" style="left:168.00px;top:972.00px;width:1.00px;height:36.00px;background:#3b3a39;"></div>
<div class="a" style="left:169.00px;top:972.00px;width:76.00px;height:35.50px;background:#fff;"></div>
<div class="a" style="left:245.00px;top:972.00px;width:1.00px;height:36.00px;background:#e1dfdd;"></div>
<div class="t" style="left: 189.3px; top: 984.75px; font-size: 12.5px; color: rgb(37, 36, 35); transform: scaleX(0.858); transform-origin: 0px 0px;">Page 1</div>
<div class="a" style="left:246.00px;top:972.00px;width:76.50px;height:35.50px;background:#fff;"></div>
<div class="t" style="left: 265.7px; top: 984.75px; font-size: 12.5px; color: rgb(37, 36, 35); transform: scaleX(0.9085); transform-origin: 0px 0px;">Page 2</div>
<div class="a" style="left:246.00px;top:1003.30px;width:76.50px;height:4.00px;background:#117865;"></div>
<div class="a" style="left:323.00px;top:972.00px;width:38.70px;height:35.50px;background:#117865;"></div>
<div class="a" style="left:337.30px;top:987.70px;width:10.00px;height:2.20px;background:#fff;"></div>
<div class="a" style="left:341.20px;top:983.80px;width:2.20px;height:10.00px;background:#fff;"></div>
<div class="t" style="left: 4px; top: 1014.45px; font-size: 12.5px; color: rgb(59, 58, 57); transform: scaleX(0.9272); transform-origin: 0px 0px;">Page 2 of 2</div>
<div class="a" style="left:1709.50px;top:1019.50px;width:3.50px;height:1.00px;background:#3b3a39;"></div>
<div class="a" style="left:1716.80px;top:1019.30px;width:100.50px;height:1.00px;background:#605e5c;"></div>
<div class="a" style="left:1760.50px;top:1013.50px;width:3.00px;height:12.00px;background:#3b3a39;"></div>
<div class="a" style="left:1767.00px;top:1016.50px;width:1.00px;height:6.00px;background:#8a8886;"></div>
<div class="a" style="left:1823.00px;top:1019.30px;width:7.00px;height:1.00px;background:#3b3a39;"></div>
<div class="a" style="left:1826.00px;top:1016.30px;width:1.00px;height:7.00px;background:#3b3a39;"></div>
<div class="t" style="left: 1844.3px; top: 1014.2px; font-size: 12px; color: rgb(59, 58, 57); transform: scaleX(0.903); transform-origin: 0px 0px;">91%</div>
<svg class="a" style="left:1886.00px;top:1013.00px;" width="17" height="13" viewBox="0 0 17 13"><g fill="none" stroke="#252423" stroke-width="1.300"><path d="M1 4.500v-3.500h4M12 1h4v3.500M16 8.500v3.500h-4M5 12h-4v-3.500"></path></g></svg>
<div class="a" style="left:347px;top:444px;width:880px;height:335px;border:5px solid #24aa4f"></div>
<div class="a" style="left:945.00px;top:279.80px;width:262.80px;height:50.20px;background:#fff200;"></div>
<div class="a" style="left:946.00px;top:341.00px;width:260.00px;height:184.00px;background:#fff200;"></div>
<div class="t" style="left: 946.6px; top: 283.55px; font-size: 17.3px; color: rgb(230, 44, 21); font-weight: bold; letter-spacing: -0.2px; transform: scaleX(0.9379); transform-origin: 0px 0px;">Click on 'Line chart' and resize</div>
<div class="t" style="left: 946.6px; top: 306.85px; font-size: 17.3px; color: rgb(230, 44, 21); font-weight: bold; letter-spacing: -0.2px; transform: scaleX(0.9478); transform-origin: 0px 0px;">and position the box on canvas.</div>
<div class="t" style="left: 946.6px; top: 344.85px; font-size: 17.3px; color: rgb(230, 44, 21); font-weight: bold; letter-spacing: -0.2px; transform: scaleX(0.9583); transform-origin: 0px 0px;">Then drag 'VehicleId' to 'X-axis'</div>
<div class="t" style="left: 946.6px; top: 367.15px; font-size: 17.3px; color: rgb(230, 44, 21); font-weight: bold; letter-spacing: -0.2px; transform: scaleX(1.0033); transform-origin: 0px 0px;">field, 'Duration' &amp; 'Movement</div>
<div class="t" style="left: 946.6px; top: 389.55px; font-size: 17.3px; color: rgb(230, 44, 21); font-weight: bold; letter-spacing: -0.2px; transform: scaleX(0.9648); transform-origin: 0px 0px;">Time' to 'Y-axis' and 'Idling Time'</div>
<div class="t" style="left: 946.6px; top: 412.15px; font-size: 17.3px; color: rgb(230, 44, 21); font-weight: bold; letter-spacing: -0.2px; transform: scaleX(0.9598); transform-origin: 0px 0px;">&amp; 'Parking Time' to 'Secondary y-</div>
<div class="t" style="left: 946.6px; top: 434.75px; font-size: 17.3px; color: rgb(230, 44, 21); font-weight: bold; letter-spacing: -0.2px; transform: scaleX(0.9309); transform-origin: 0px 0px;">axis'.</div>
<div class="t" style="left: 946.6px; top: 481.55px; font-size: 17.3px; color: rgb(230, 44, 21); font-weight: bold; letter-spacing: -0.2px; transform: scaleX(0.9461); transform-origin: 0px 0px;">(We can add MULTIPLE data</div>
<div class="t" style="left: 946.6px; top: 503.75px; font-size: 17.3px; color: rgb(230, 44, 21); font-weight: bold; letter-spacing: -0.2px; transform: scaleX(0.9417); transform-origin: 0px 0px;">fields for each axis)</div>
<div class="a" style="left:1406.30px;top:197.60px;width:80.00px;height:80.50px;background:linear-gradient(90deg,#fbfbfb 0,#fbfbfb 19px,#f4f3f2 19px);"></div>
<div class="a" style="left:1425.50px;top:197.60px;width:1.00px;height:80.00px;background:#d8d6d4;"></div>
<div class="a" style="left:1435px;top:248px;width:24px;height:24px;border:1.200px solid #323130;background:#f6f5f4"></div>
<svg class="a" style="left:1438.00px;top:250.90px;" width="18" height="18" viewBox="0 0 18 18"><g fill="none" stroke="#323130" stroke-width="1.100"><path d="M0.800 0.500v16h16.500"></path><path d="M1.500 11.500l5-6 3.500 3.500 3.500-4.500 3 3" stroke="#323130"></path><path d="M1.500 14.500l5.500-6 3.500 2 5.500-6.500" stroke="#4a7a6e"></path></g></svg>
<svg class="a" style="left:1466.20px;top:250.90px;" width="18" height="18" viewBox="0 0 18 18"><g fill="none" stroke="#323130" stroke-width="1.100"><path d="M0.800 16.500v-6l5.700-8 5.500 9.500 3-8.500 2.500 8v5z" fill="#fff" stroke="#323130"></path><path d="M12 10.500l3-8 2.500 8v6h-5z" fill="#c8c6c4" stroke="#8a8886"></path><path d="M0.800 16.800v-4.500l2.500 1.500 4.700-5.300 3.500 4 3-3.500 3 3v4.800z" fill="#6db5ef" stroke="#2b88d8"></path></g></svg>
<svg class="a" style="left:1438px;top:232px" width="48" height="10" viewBox="0 0 48 10"><g fill="none" stroke="#323130" stroke-width="1.100"><path d="M0.500 0v8.500h16.500"></path><path d="M28 8.500h17M30.500 2v6.500M34 4v4.500M37.500 3v5.500M41 4v4.500M44.500 0v8.500"></path></g></svg>
<div class="a" style="left:1412.900px;top:206.200px;width:68.400px;height:32px;background:#fff;border-radius:2px;box-shadow:0 1px 6px rgba(0,0,0,.28)"></div>
<div class="a" style="left:1441.900px;top:233.200px;width:10px;height:10px;background:#fff;transform:rotate(45deg)"></div>
<div class="t" style="left: 1421.7px; top: 216.9px; font-size: 12px; color: rgb(37, 36, 35); transform: scaleX(0.9734); transform-origin: 0px 0px;">Line chart</div>
<svg class="a" style="left:1447.00px;top:201.50px;" width="8" height="5" viewBox="0 0 8 5"><path d="M1 4l3-3 3 3" fill="none" stroke="#a19f9d" stroke-width="1"></path></svg>
<div class="rb" style="left:1402px;top:193.3px;width:88.8px;height:89.0px;border-width:4.3px"></div>
<div class="rb" style="left:1424.4px;top:447.4px;width:188.2px;height:188.6px;border-width:4.3px"></div>
<div class="rb" style="left:1636.2px;top:589.1px;width:178.3px;height:27.5px;border-width:4.3px"></div>
<div class="rb" style="left:1636.9px;top:658.5px;width:190.0px;height:30.2px;border-width:4.3px"></div>
<div class="rb" style="left:1636.9px;top:756.7px;width:189.9px;height:27.5px;border-width:4.3px"></div>
<div class="rb" style="left:1636px;top:804.2px;width:168.9px;height:33.5px;border-width:4.3px"></div>
<div class="rb" style="left:1640.2px;top:874.5px;width:118.0px;height:32.1px;border-width:4.3px"></div>
<svg class="a" style="left:0;top:0" width="1920" height="1030" viewBox="0 0 1920 1030"><g stroke="#e0192d" fill="none" stroke-linecap="round"><path d="M1453.500 503.500H1579.500" stroke-width="4.600"></path><path d="M1553.300 505L1644 878" stroke-width="4.200" stroke-linecap="butt"></path></g></svg>
</body></html>
